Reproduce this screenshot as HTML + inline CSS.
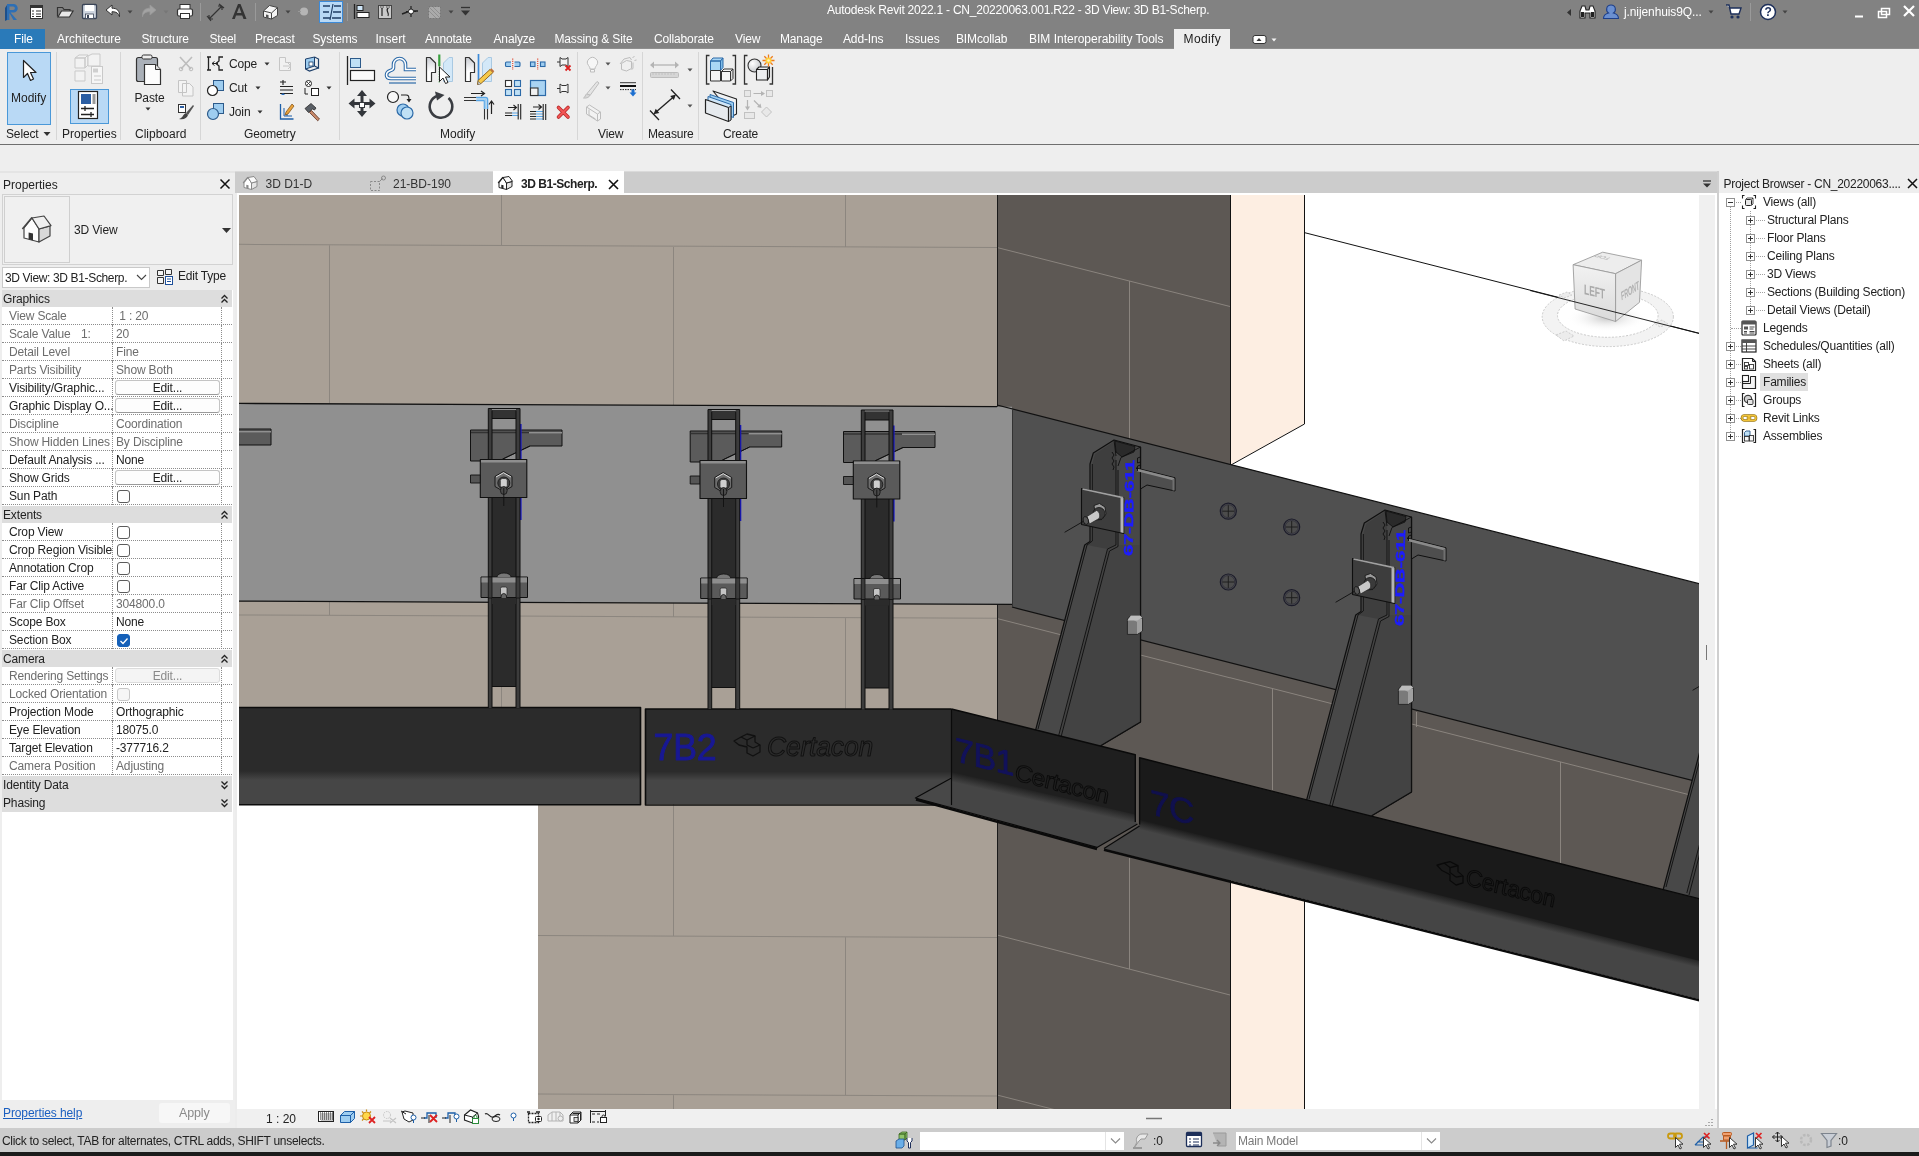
<!DOCTYPE html>
<html lang="en">
<head>
<meta charset="utf-8">
<title>Autodesk Revit 2022.1 - CN_20220063.001.R22 - 3D View: 3D B1-Scherp.</title>
<style>
*{box-sizing:border-box;margin:0;padding:0}
html,body{width:1919px;height:1156px;overflow:hidden;background:#eeeeee}
body{position:relative;will-change:transform;font-family:"Liberation Sans",sans-serif;font-size:12px;color:#222;letter-spacing:-0.15px}
.abs,.abs>*{position:absolute}
.t{position:absolute;white-space:nowrap;line-height:16px;height:16px}
svg{position:absolute;overflow:visible}
/* title + tabs */
#titlebar{left:0;top:0;width:1919px;height:49px;background:transparent;z-index:2}
#titlebg{left:0;top:0;width:1919px;height:48px;background:#828282}
#titlebar .t{color:#fff}
#filetab{left:0;top:29px;width:45px;height:20px;background:#2a7ab9}
#modtab{left:1174px;top:29px;width:56px;height:20px;background:#eeeeee}
/* ribbon */
#ribbon{left:0;top:48px;width:1919px;height:97px;background:#eeeeee;border-bottom:1px solid #6e6e6e}
.sep{position:absolute;top:4px;width:1px;height:88px;background:#d6d6d6}
#optbar{left:0;top:145px;width:1919px;height:26px;background:#eeeeee}
/* view tab strip */
#tabstrip{left:235px;top:171px;width:1482px;height:22px;background:#cccccc}
/* properties */
#props{left:0;top:171px;width:235px;height:957px;background:#eeeeee}
.prow{position:absolute;left:2px;width:230px;height:18px;background:#fff;border-bottom:1px dotted #8c8c8c}
.prow .n{position:absolute;left:7px;top:1px;line-height:17px;white-space:nowrap}
.prow .v{position:absolute;left:114px;top:1px;line-height:17px;white-space:nowrap}
.prow.d .n,.prow.d .v{color:#6d6d6d}
.prow:before{content:"";position:absolute;left:110px;top:0;height:18px;border-left:1px dotted #8c8c8c}
.prow:after{content:"";position:absolute;left:219px;top:0;height:18px;border-left:1px dotted #8c8c8c}
.phead{position:absolute;left:2px;width:230px;height:18px;background:#dddddd}
.phead span{position:absolute;left:1px;top:0;line-height:18px}
.btn{position:absolute;left:113px;top:1px;width:105px;height:15px;border:1px solid #c4c4c4;border-bottom-color:#9a9a9a;border-radius:3px;background:#fdfdfd;text-align:center;line-height:14px}
.cb{position:absolute;left:115px;top:3px;width:13px;height:13px;border:1px solid #5c5c5c;border-radius:3px;background:#fff}
/* project browser */
#pb{left:1719px;top:171px;width:200px;height:957px;background:#fff}
.tr{position:absolute;white-space:nowrap;line-height:18px;height:18px}
.pm{position:absolute;width:9px;height:9px;border:1px solid #919191;background:#fff}
.pm:before{content:"";position:absolute;left:1px;top:3px;width:5px;height:1px;background:#333}
.pm.p:after{content:"";position:absolute;left:3px;top:1px;width:1px;height:5px;background:#333}
/* status */
#status{left:0;top:1128px;width:1919px;height:24px;background:#cccccc}
#blackbar{left:0;top:1152px;width:1919px;height:4px;background:#1b1b1b}
</style>
</head>
<body>
<div id="titlebg" class="abs"></div>
<div id="titlebar" class="abs">
  <div class="t" style="left:827px;top:2px;letter-spacing:-0.23px">Autodesk Revit 2022.1 - CN_20220063.001.R22 - 3D View: 3D B1-Scherp.</div>
  <!-- QAT icons -->
  <svg style="left:0;top:0" width="480" height="26" viewBox="0 0 480 26">
    <!-- R logo -->
    <path d="M7 4h6.5a4 4 0 0 1 0 8.5H10.5L17 20h-3.6l-4-7V20H7z" fill="#2d6fb5"/>
    <path d="M9.5 6.5h3.6a1.8 1.8 0 0 1 0 3.6H9.5z" fill="#828282"/>
    <path d="M5 8l2 -3v15l-2 1z" fill="#1d4f8a"/>
    <!-- list icon -->
    <rect x="30.5" y="5.500" width="12" height="13" fill="#fff" stroke="#333"/><rect x="30" y="5" width="13" height="3" fill="#333"/>
    <path d="M32 11h2M32 14h2M32 16.500h2M36 11h5M36 14h5M36 16.500h5" stroke="#333" stroke-width="1.2"/>
    <!-- open folder -->
    <path d="M57.500 16.500v-9h5l1.500 2h6v2" fill="none" stroke="#333" stroke-width="1.2"/><path d="M58 17l3.500-6h11.500l-3.500 6z" fill="#e8e8e8" stroke="#333" stroke-width="1.2"/>
    <!-- save -->
    <rect x="82.500" y="4.500" width="14" height="14" rx="1" fill="#cfd6e0" stroke="#3a4456" stroke-width="1.3"/><rect x="85" y="5" width="9" height="6" fill="#fff"/><rect x="85.500" y="14" width="8" height="4.500" fill="#fff" stroke="#3a4456" stroke-width=".8"/><rect x="87" y="15" width="2" height="3" fill="#3a4456"/>
    <!-- undo -->
    <path d="M106 10l6-5v3.200c5 0 8 2.500 7.500 8.500c-1-3.500-3-5-7.500-5v3.300z" fill="#fff" stroke="#333" stroke-width="1"/>
    <path d="M127.500 10.500h5l-2.500 3z" fill="#444"/>
    <!-- redo -->
    <path d="M156 10l-6-5v3.200c-5 0-8 2.500-7.500 8.500c1-3.500 3-5 7.500-5v3.300z" fill="#a3a3a3" stroke="#999" stroke-width=".8"/>
    <path d="M163.500 10.500h5l-2.500 3z" fill="#777"/>
    <!-- print -->
    <rect x="180" y="4.500" width="10" height="5" fill="#fff" stroke="#333"/><rect x="177.500" y="9" width="15" height="7" rx="1.500" fill="#fff" stroke="#333" stroke-width="1.2"/><rect x="180.500" y="13.500" width="9" height="5" fill="#fff" stroke="#333"/>
    <path d="M200.500 3v18" stroke="#9a9a9a"/>
    <!-- measure arrows -->
    <path d="M209 19l13-13M209 19v-4M209 19h4M222 6v4M222 6h-4M207 16l4 5M219 4l5 4" stroke="#333" stroke-width="1.2" fill="none"/>
    <!-- A -->
    <path d="M232 19l6-15h2.500l6 15h-3l-1.300-3.500h-6.200L234.800 19zM236.900 13h4.500l-2.200-6z" fill="#333"/>
    <path d="M255.500 3v18" stroke="#9a9a9a"/>
    <!-- house 3d -->
    <path d="M263.500 11l6-5.500 8 2v8l-6 3.500-8-2z" fill="#f4f4f4" stroke="#444" stroke-width="1"/><path d="M263.500 11l8 2 6-5.500M271.500 13v6" stroke="#444" fill="none"/><path d="M266 14.500v3.300l2.500.6v-3.300z" fill="#555"/>
    <path d="M285.500 10.500h5l-2.500 3z" fill="#444"/>
    <circle cx="304" cy="11.500" r="4" fill="#b5b5b5"/><path d="M298 11.500h3" stroke="#999"/>
    <!-- active icon -->
    <rect x="319.500" y="1.500" width="23" height="21" fill="#b9d9f5" stroke="#3c8ad8"/>
    <path d="M323 6h7M323 12h6M323 18h7M334 6h7M333 12h8M332 18h9" stroke="#1f3d63" stroke-width="1.600"/><path d="M333 4l-3 16" stroke="#1f3d63" stroke-width="1.200"/>
    <path d="M347.500 3v18" stroke="#9a9a9a"/>
    <path d="M354.500 4v15" stroke="#222" stroke-width="1.300"/><rect x="357" y="5.500" width="6" height="5" fill="#cfe6f8" stroke="#222"/><rect x="357" y="12.500" width="12" height="5" fill="#fff" stroke="#222"/>
    <rect x="378.500" y="5.500" width="13" height="13" fill="#c9c9c9" stroke="#444"/><path d="M382 8v8M388 8c-3 3 2 5 0 8" stroke="#222" fill="none" stroke-width="1.200"/><circle cx="382" cy="7" r="1.300" fill="#fff" stroke="#222" stroke-width=".7"/><circle cx="388" cy="7" r="1.300" fill="#fff" stroke="#222" stroke-width=".7"/>
    <path d="M402 14l8-3h8" stroke="#222" stroke-width="1.400" fill="none"/><path d="M411 6v11M406 11.500h10" stroke="#222" stroke-width="1.200"/><circle cx="411" cy="11.500" r="2.500" fill="#fff" stroke="#222"/>
    <rect x="428.500" y="6.500" width="12" height="12" fill="#aaa" stroke="#777" stroke-dasharray="2 1"/><path d="M429 7l11 11M433 7l7 7M429 11l7 7" stroke="#888" stroke-width=".8"/>
    <path d="M448.500 10.500h5l-2.500 3z" fill="#444"/>
    <path d="M461 7.500h9" stroke="#333" stroke-width="1.300"/><path d="M461 10.500h9l-4.500 5z" fill="#333"/>
  </svg>
  <!-- right side -->
  <svg style="left:1560px;top:0" width="359" height="26" viewBox="1560 0 359 26">
    <path d="M1571 9v7l-4-3.500z" fill="#333"/>
    <!-- binoculars -->
    <path d="M1580 18v-7l2-5h3l1 4h3l1-4h3l2 5v7h-5v-5h-5v5z" fill="#fff" stroke="#222" stroke-width="1.100"/><rect x="1581" y="12" width="3" height="5" fill="#222"/><rect x="1591" y="12" width="3" height="5" fill="#222"/>
    <!-- user -->
    <path d="M1603.500 18.500c0-4 3-5 5-5.500-3-2-2.500-8 2.500-8s5.500 6 2.500 8c2 .5 5 1.500 5 5.500z" fill="#6a8fd0" stroke="#1d3f8a" stroke-width="1.100"/>
    <path d="M1708.500 10.500h5l-2.500 3z" fill="#444"/>
    <!-- cart -->
    <path d="M1726 5h3l2 9h8l2-6h-11" fill="#fff" stroke="#1d2f5a" stroke-width="1.400"/><circle cx="1732" cy="17" r="1.600" fill="#1d2f5a"/><circle cx="1738" cy="17" r="1.600" fill="#1d2f5a"/>
    <path d="M1750.500 3v18" stroke="#9a9a9a"/>
    <circle cx="1768" cy="12" r="7.500" fill="#fff" stroke="#1d2f5a" stroke-width="1.500"/>
    <path d="M1782.500 10.500h5l-2.500 3z" fill="#444"/>
    <path d="M1855 16.500h8" stroke="#fff" stroke-width="2"/>
    <path d="M1881.500 8.500h8v6h-8zM1878.500 11.500h8v6h-8z" fill="#828282" stroke="#fff" stroke-width="1.500"/>
    <path d="M1904 6l10 10M1914 6l-10 10" stroke="#fff" stroke-width="2.200"/>
  </svg>
  <div class="t" style="left:1764.500px;top:4px;color:#1d2f5a;font-weight:bold;font-size:12px">?</div>
  <div class="t" style="left:1624px;top:4px;letter-spacing:-0.1px">j.nijenhuis9Q...</div>
  <!-- ribbon tabs -->
  <div id="filetab"></div>
  <div id="modtab"></div>
  <div style="left:45px;top:48px;width:1129px;height:1px;background:#8e8e8e"></div><div style="left:1230px;top:48px;width:689px;height:1px;background:#8e8e8e"></div>
  <div class="t" style="left:14px;top:31px">File</div>
  <div class="t" style="left:57px;top:31px;letter-spacing:0">Architecture</div>
  <div class="t" style="left:141.500px;top:31px">Structure</div>
  <div class="t" style="left:209.500px;top:31px">Steel</div>
  <div class="t" style="left:255px;top:31px">Precast</div>
  <div class="t" style="left:312.500px;top:31px">Systems</div>
  <div class="t" style="left:375.500px;top:31px;letter-spacing:0">Insert</div>
  <div class="t" style="left:425px;top:31px">Annotate</div>
  <div class="t" style="left:493.500px;top:31px">Analyze</div>
  <div class="t" style="left:554.500px;top:31px">Massing &amp; Site</div>
  <div class="t" style="left:654px;top:31px">Collaborate</div>
  <div class="t" style="left:735px;top:31px">View</div>
  <div class="t" style="left:780px;top:31px">Manage</div>
  <div class="t" style="left:843px;top:31px">Add-Ins</div>
  <div class="t" style="left:905px;top:31px;letter-spacing:0">Issues</div>
  <div class="t" style="left:956px;top:31px">BIMcollab</div>
  <div class="t" style="left:1029px;top:31px;letter-spacing:0">BIM Interoperability Tools</div>
  <div class="t" style="left:1183.500px;top:31px;color:#1a1a1a;letter-spacing:.4px">Modify</div>
  <svg style="left:1250.500px;top:33px" width="30" height="14" viewBox="0 0 30 14"><rect x="2" y="2.500" width="13" height="8" rx="2" fill="#fff" stroke="#333"/><path d="M5.500 8h5l-2.500-3z" fill="#333"/><path d="M20.500 5.500h5l-2.500 3z" fill="#f4f4f4"/></svg>
</div>
<div id="ribbon" class="abs">
  <div class="sep" style="left:56px"></div><div class="sep" style="left:120px"></div><div class="sep" style="left:200px"></div>
  <div class="sep" style="left:339px"></div><div class="sep" style="left:577px"></div><div class="sep" style="left:642px"></div><div class="sep" style="left:698px"></div>
  <!-- Modify big button -->
  <div style="left:7px;top:4px;width:44px;height:73px;background:#b9d9f5;border:1px solid #4a98d8"></div>
  <div style="left:70px;top:41px;width:39px;height:35px;background:#b9d9f5;border:1px solid #4a98d8"></div>
  <div class="t" style="left:11px;top:42px;letter-spacing:0">Modify</div>
  <div class="t" style="left:6px;top:78px">Select</div>
  <div class="t" style="left:62px;top:78px;letter-spacing:0">Properties</div>
  <div class="t" style="left:134.500px;top:42px">Paste</div>
  <div class="t" style="left:135px;top:78px;letter-spacing:0">Clipboard</div>
  <div class="t" style="left:229px;top:8px">Cope</div>
  <div class="t" style="left:229px;top:32px">Cut</div>
  <div class="t" style="left:229px;top:56px">Join</div>
  <div class="t" style="left:244px;top:78px">Geometry</div>
  <div class="t" style="left:440px;top:78px;letter-spacing:0">Modify</div>
  <div class="t" style="left:598px;top:78px">View</div>
  <div class="t" style="left:648px;top:78px">Measure</div>
  <div class="t" style="left:723px;top:78px">Create</div>
  <svg style="left:0;top:0" width="800" height="96" viewBox="0 48 800 96">
    <!-- cursor arrow -->
    <path d="M23.500 60.500v17l4-4 3 7 3-1.500-3-6.500h5.500z" fill="#fff" stroke="#222" stroke-width="1.200" stroke-linejoin="round"/>
    <path d="M43.500 132h7l-3.500 4z" fill="#333"/>
    <!-- type properties (grey) -->
    <g fill="#f2f2f2" stroke="#c9c9c9"><path d="M75 58l4-3h9l-3 3zM75 58h10v10h-10zM85 58l3-3v10l-3 3z"/><path d="M75 71h10v10h-10zM88 56l4-2h8v12l-12 0z"/><rect x="91.500" y="66.500" width="11" height="17" fill="#f6f6f6"/></g><rect x="93" y="68.500" width="5" height="4" fill="#cfcfcf"/><path d="M94 76h7M94 80h7" stroke="#c9c9c9"/>
    <!-- properties icon -->
    <rect x="78.500" y="91.500" width="19" height="27" fill="#fff" stroke="#222" stroke-width="1.200"/><rect x="81" y="94" width="10" height="10" fill="#2b5ea3"/><rect x="92.500" y="94" width="3" height="10" fill="#9a9a9a"/><path d="M81 108.500h13M81 114.500h13M85 106v5M91 112v5" stroke="#222" stroke-width="1.300"/>
    <!-- paste -->
    <rect x="136.500" y="57.500" width="21" height="24" rx="2" fill="#aab0b8" stroke="#333" stroke-width="1.200"/><rect x="142" y="55" width="10" height="4" rx="1.500" fill="#eee" stroke="#333"/><path d="M144.500 64.500h11l5 5v15h-16z" fill="#fdfdfd" stroke="#333" stroke-width="1.200"/><path d="M155.500 64.500v5h5" fill="#ddd" stroke="#333"/>
    <path d="M145.500 107.500h5l-2.500 3z" fill="#333"/>
    <!-- scissors gray -->
    <path d="M180 57l11 12M192 57l-11 12" stroke="#bdbdbd" stroke-width="1.600"/><circle cx="181" cy="69" r="1.800" fill="none" stroke="#bdbdbd"/><circle cx="191" cy="69" r="1.800" fill="none" stroke="#bdbdbd"/>
    <path d="M178.500 80.500h8v12h-8zM182.500 83.500h7l3.500 3.500v9h-10.500z" fill="#f3f3f3" stroke="#c4c4c4"/>
    <!-- match brush -->
    <rect x="178.500" y="104.500" width="7" height="8" fill="#fff" stroke="#333"/><rect x="180" y="106" width="4" height="2" fill="#2b5ea3"/><path d="M193 105l-7 8 2 2 6-9z" fill="#555"/><path d="M186 113c-3 1-3 5-7 6c5 1 8-1 9-4z" fill="#444"/>
    <!-- cope/cut/join icons -->
    <path d="M208.500 57v13M207 57h4M207 70h4M223 57h-4v4l-3 2.500 3 2.500v4h4" fill="none" stroke="#222" stroke-width="1.300"/><path d="M212 63.500h6M212 63.500l2.500-2M212 63.500l2.500 2" stroke="#222" fill="none"/>
    <rect x="213.500" y="80.500" width="10" height="10" fill="#9ecdf0" stroke="#2c5a8a"/><circle cx="212.500" cy="90.500" r="5" fill="#fff" stroke="#222" stroke-width="1.200"/>
    <rect x="213.500" y="103.500" width="10" height="10" fill="#9ecdf0" stroke="#2c5a8a"/><circle cx="213" cy="114" r="5.500" fill="#9ecdf0" stroke="#2c5a8a" stroke-width="1.200"/>
    <path d="M264.500 62.500h5l-2.500 3zM255.500 86.500h5l-2.500 3zM257.500 110.500h5l-2.500 3zM326.500 86.500h5l-2.500 3z" fill="#333"/>
    <!-- geometry col 2 -->
    <path d="M279.500 57.500h6v5h5v8h-11z" fill="#f1f1f1" stroke="#c6c6c6"/><path d="M283 66h8M288 63l3 3-3 3" stroke="#c6c6c6" fill="none"/>
    <path d="M280 82h6M283 80v5M280 86.500h13M280 90h13M280 93.500h13" stroke="#222" stroke-width="1.100"/><path d="M281 95l2-2 2 2z" fill="#2b6fc0"/>
    <path d="M280.500 104v15h13" fill="none" stroke="#1d5fa8" stroke-width="1.300"/><path d="M284 108v8h8M287 111v5" stroke="#1d5fa8" fill="none"/><path d="M292 104l-6 8-1 3 3-1 6-8z" fill="#e9a23b" stroke="#7a4a10" stroke-width=".7"/>
    <!-- geometry col 3 -->
    <path d="M305.500 59l9-2v9l-9 3z" fill="#9ecdf0" stroke="#1d3f6a"/><path d="M314.500 57l4 2v9l-4 -2M305.500 69l4 2 9-3" fill="none" stroke="#1d3f6a" stroke-width="1.200"/><rect x="309" y="62" width="4" height="4" fill="#fff" stroke="#1d3f6a" stroke-width=".8"/>
    <circle cx="308.500" cy="83.500" r="3" fill="#fff" stroke="#222"/><path d="M306.500 81.500l4 4M310.500 81.500l-4 4" stroke="#222" stroke-width=".8"/><rect x="311.500" y="88.500" width="7" height="7" fill="#fff" stroke="#222"/><path d="M305 88v6h3" stroke="#222" fill="none"/>
    <path d="M305 108.500l6-5 5 4.500-1.500 2-2-1-4 3.500z" fill="#5a5f66" stroke="#2a2a2a" stroke-width=".8"/><path d="M311.500 110.500l8 8.500-1.800 1.800-8.200-8.300z" fill="#c98a6a" stroke="#5a3020" stroke-width=".8"/>
    <!-- Modify panel big icons -->
    <defs><linearGradient id="mg" x1="0" y1="0" x2="0" y2="1"><stop offset="0" stop-color="#c9ccd2"/><stop offset=".6" stop-color="#fff"/></linearGradient></defs>
    <path d="M347.500 56v29" stroke="#222" stroke-width="1.300"/><rect x="350.500" y="58.500" width="10" height="9" fill="#bfe0f5" stroke="#2c5a8a"/><rect x="350.500" y="70.500" width="24" height="10" fill="#fafafa" stroke="#222" stroke-width="1.200"/>
    <path d="M416 69.500h-10.500v-5a6 6 0 0 0-12 0v3c0 2-1 2.500-3 3c-3 1-4 2.500-4 4.500s1.500 3.500 4.500 3.500H416" fill="none" stroke="#2c6aa8" stroke-width="3.600"/><path d="M416 69.500h-10.500v-5a6 6 0 0 0-12 0v3c0 2-1 2.500-3 3c-3 1-4 2.500-4 4.500s1.500 3.500 4.500 3.500H416" fill="none" stroke="#fff" stroke-width="1.500"/><path d="M389 83H416" stroke="#2c6aa8" stroke-width="1.200"/>
    <!-- mirror pick axis -->
    <path d="M426.500 57.500h3.500l5.500 5.500v9.500h-4v9h-5z" fill="url(#mg)" stroke="#333" stroke-width="1.200" stroke-linejoin="round"/>
    <path d="M452.500 57.500h-3.500l-5.500 5.500v18.500h9z" fill="#d3e8f8" stroke="#a9c9e2" stroke-width="1"/>
    <path d="M439.300 54.500v11.500" stroke="#3aa040" stroke-width="2.200"/><path d="M439.300 66v17.500" stroke="#7ab87e" stroke-width="1.400" stroke-dasharray="1.500 1"/>
    <path d="M439.500 67v14.500l3.500-3.500 2.500 5.500 2.500-1-2.500-5.500h4.500z" fill="#fff" stroke="#222" stroke-width="1"/>
    <!-- mirror draw axis -->
    <path d="M465.500 57.500h3.500l5.500 5.500v9.500h-4v9h-5z" fill="url(#mg)" stroke="#333" stroke-width="1.200" stroke-linejoin="round"/>
    <path d="M491.500 57.500h-3.500l-5.500 5.500v18.500h9z" fill="#d3e8f8" stroke="#a9c9e2" stroke-width="1"/>
    <path d="M478.500 54v27.500" stroke="#3c8ad8" stroke-width="1.700"/>
    <path d="M490 69.500l3 3-12 11-3.500 1 .500-4z" fill="#f6c94a" stroke="#8a5a14" stroke-width=".9" stroke-linejoin="round"/><path d="M478 84.500l.300-3 2.500 2.200z" fill="#fff" stroke="#555" stroke-width=".6"/><path d="M490 69.500l3 3 1.300-1.300-3-3z" fill="#c0703a"/>
    <!-- row 2 -->
    <path d="M362 90l5 6h-3.500v6h6v-3.500l6 5-6 5v-3.500h-6v6h3.500l-5 6-5-6h3.500v-6h-6v3.500l-6-5 6-5v3.500h6v-6h-3.500z" fill="#33363b"/><rect x="359.500" y="102.500" width="5" height="5" fill="#fff" stroke="#33363b"/>
    <circle cx="393" cy="97" r="5.500" fill="#f8f8f8" stroke="#222" stroke-width="1.200"/><circle cx="403" cy="110" r="6" fill="#9ecdf0" stroke="#2c6aa8" stroke-width="1.200"/><circle cx="407" cy="113" r="6" fill="#bfe0f5" stroke="#2c6aa8" stroke-width="1.200"/><path d="M401 95h5c2.500 0 3 1 3 5" fill="none" stroke="#222" stroke-width="1.200"/><path d="M406.500 99h5l-2.500 3.500z" fill="#222"/>
    <path d="M448.500 98a11.300 11.300 0 1 1-11-2.300" fill="none" stroke="#3a3d42" stroke-width="2.600"/><path d="M435 91.500l9.500 3.500-7.500 5.500z" fill="#3a3d42"/>
    <path d="M476 97.500h9.500c1 0 2 1 2 2v9.500M476 100.500h7.500c.8 0 1 .5 1 1v7.500" fill="none" stroke="#5aa6e6" stroke-width="1.600"/><path d="M477 99h8.500v10" fill="none" stroke="#9ecdf0" stroke-width="1.500"/>
    <path d="M464 97.500h12M464 100.500h12M484.500 109v10.500M487.500 109v10.500" stroke="#333" stroke-width="1.100"/>
    <path d="M471 93.500h13M481 91l3.500 2.500-3.500 2.500M491.500 114v-12.500M489 104.500l2.500-3.500 2.500 3.500" stroke="#222" fill="none" stroke-width="1.200"/>
    <!-- small icons -->
    <rect x="505.500" y="62" width="14.500" height="4.500" rx="1" fill="#9ecdf0" stroke="#2c6aa8" stroke-width="1.100"/><rect x="511" y="61" width="3.500" height="6.500" fill="#eee"/><path d="M512.700 58.500v11.500" stroke="#e0503a" stroke-width="1.200" stroke-dasharray="1.200 1"/>
    <rect x="530.500" y="62" width="4.500" height="4.500" fill="#9ecdf0" stroke="#2c6aa8" stroke-width="1.100"/><rect x="540.500" y="62" width="4.500" height="4.500" fill="#9ecdf0" stroke="#2c6aa8" stroke-width="1.100"/><path d="M537.700 58.500v11.500" stroke="#e0503a" stroke-width="1.200" stroke-dasharray="1.200 1"/>
    <rect x="505.500" y="80.500" width="6" height="6" fill="#fff" stroke="#333" stroke-width="1.100"/><rect x="514.500" y="80.500" width="6" height="6" fill="#bfe0f5" stroke="#2c6aa8" stroke-width="1.100"/><rect x="505.500" y="89.500" width="6" height="6" fill="#bfe0f5" stroke="#2c6aa8" stroke-width="1.100"/><rect x="514.500" y="89.500" width="6" height="6" fill="#bfe0f5" stroke="#2c6aa8" stroke-width="1.100"/>
    <rect x="530.500" y="80.500" width="15" height="15" fill="#a9d3f2" stroke="#2c6aa8" stroke-width="1.200"/><rect x="530.500" y="88" width="7.500" height="7.500" fill="#f2f2f2" stroke="#333" stroke-width="1.100"/>
    <path d="M508 107.500h8M513.500 105l3 2.500-3 2.500M505 113h7M505 115.500h7" stroke="#222" fill="none" stroke-width="1.100"/><path d="M512 113h6M512 115.500h6" stroke="#5aa6e6" stroke-width="1.200"/><path d="M518.200 104v15.500M520.700 104v15.500" stroke="#222" stroke-width="1.100"/>
    <path d="M533 107h8M538.500 104.500l3 2.500-3 2.500M530 111.500h6M530 114h6M530 116.500h6M530 119h6" stroke="#222" fill="none" stroke-width="1.100"/><path d="M536 111.500h7M536 114h7M536 116.500h7M536 119h7" stroke="#5aa6e6" stroke-width="1.200"/><path d="M543.200 104v16M545.700 104v16" stroke="#222" stroke-width="1.100"/>
    <path d="M557 62h3M560 57.500l2 1.500h4l2-1.500v9l-2-1.500h-4l-2 1.500z" fill="#f4f4f4" stroke="#333" stroke-width="1"/><path d="M565.500 65.500l5 5M570.500 65.500l-5 5" stroke="#d22" stroke-width="1.800"/>
    <path d="M557 88.500h3M560 84l2 1.500h4l2-1.500v9l-2-1.500h-4l-2 1.500z" fill="#f4f4f4" stroke="#333" stroke-width="1"/>
    <path d="M558.500 107.500l9.500 9.500M568 107.500l-9.500 9.500" stroke="#b82a2a" stroke-width="3.600" stroke-linecap="round"/><path d="M558.500 107.500l9.500 9.500M568 107.500l-9.500 9.500" stroke="#f25555" stroke-width="2" stroke-linecap="round"/>
    <!-- View panel (grey) -->
    <g stroke="#bdbdbd" fill="#f6f6f6" stroke-width="1"><path d="M588.500 65.500a5 5 0 1 1 8 0c-1 1.200-1.500 2.300-1.500 3.500h-5c0-1.200-.5-2.300-1.500-3.500z"/><path d="M590.500 69.500h4v2.500h-4z"/>
    <path d="M621.500 63.500l5-3 5 1v7l-5 2.500-5-1.500z" fill="#efefef"/><path d="M620 64l4-5 6-1.500M630 57.500l1.500 2.500M632.500 58l2-2M634.500 60.500l2-.5M633 62.500v6l-1.500 1" fill="none"/>
    <path d="M587 93.500l10-12 2 1.500-9 12.500z" fill="#e4e4e4"/><path d="M586.500 94c-1.500 1-1 3-3 4c3.500.5 6-1 6.500-3z" fill="#d8d8d8"/>
    <path d="M586.500 107l3-2 11 7v7l-3 2-11-7z" fill="#f2f2f2"/><path d="M586.500 107l11 7v7M597.500 114l3-2M589 109.500v5.500l6.500 4" fill="none"/></g>
    <path d="M605.500 62.500h5l-2.500 3zM605.500 86.500h5l-2.500 3z" fill="#555"/>
    <path d="M620 82.700h16" stroke="#222" stroke-width=".9"/><path d="M620 86h16" stroke="#111" stroke-width="2"/><path d="M620 89.600h16" stroke="#222" stroke-width="1" stroke-dasharray="1.500 1"/><path d="M631.500 89.500h3v3h2l-3.500 4-3.500-4h2z" fill="#1d6fd0"/>
    <!-- Measure -->
    <path d="M652 65h25" stroke="#b4b4b4" stroke-width="1.300"/><path d="M650 65l4-3.500v7zM679 65l-4-3.500v7z" fill="#b4b4b4"/><rect x="650.500" y="72.500" width="28" height="5" rx="1" fill="#d6d6d6" stroke="#bcbcbc"/><path d="M653 73v2M656 73v2M659 73v2M662 73v2M665 73v2M668 73v2M671 73v2M674 73v2" stroke="#bcbcbc" stroke-width=".8"/>
    <path d="M687.500 68.500h5l-2.500 3zM687.500 104.500h5l-2.500 3z" fill="#555"/>
    <path d="M655.500 112.500l18.500-16" stroke="#222" stroke-width="1.400"/><path d="M650 110.500l9 9.500M671 89.500l9 9.500" stroke="#222" stroke-width="1.300"/><path d="M653.500 114.300l5.800-1.300-3.600-4.200zM676 94.600l-5.800 1.300 3.600 4.200z" fill="#222"/>
    <!-- Create -->
    <path d="M709.500 55.500h-3v28.500h3M732.500 55.500h3v28.500h-3" fill="none" stroke="#333" stroke-width="1.300"/>
    <path d="M710.500 61l2.500-3h10l-2.500 3zM710.500 61h10v9.500h-10z" fill="#a9d6f5" stroke="#2c6aa8" stroke-width="1"/><path d="M720.500 61l2.500-3v9.500l-2.500 3z" fill="#7fbce8" stroke="#2c6aa8" stroke-width="1"/>
    <path d="M710.500 70.500h10v10.500h-10z" fill="#f4f4f4" stroke="#333" stroke-width="1"/><path d="M721.500 71.500l2.500-2.500h9l-2.500 2.500zM721.500 71.500h9v9.500h-9z" fill="#f4f4f4" stroke="#333" stroke-width="1"/><path d="M730.500 71.500l2.500-2.500v9.500l-2.500 2.500z" fill="#dcdcdc" stroke="#333" stroke-width="1"/>
    <path d="M747.500 55.500h-3v28.500h3M772.500 67v17h-3" fill="none" stroke="#333" stroke-width="1.300"/>
    <defs><radialGradient id="sg" cx=".35" cy=".35" r=".7"><stop offset="0" stop-color="#fff"/><stop offset="1" stop-color="#c4c8cc"/></radialGradient></defs>
    <circle cx="754.500" cy="65.500" r="6.500" fill="url(#sg)" stroke="#333" stroke-width="1.100"/>
    <path d="M756.500 69.500l2.500-2.500h10.500l-2 2.500zM756.500 69.500h11v10.500h-11z" fill="#eceef0" stroke="#222" stroke-width="1.100" stroke-linejoin="round"/><path d="M767.500 69.500l2-2.500v10l-2 3z" fill="#cfd3d6" stroke="#222" stroke-width="1.100" stroke-linejoin="round"/>
    <path d="M768.500 54.500v12M762.500 60.500h12M764.300 56.300l8.400 8.400M772.700 56.300l-8.400 8.400" stroke="#ee7a1a" stroke-width="1.300"/><circle cx="768.500" cy="60.500" r="3" fill="#ffd23a"/><circle cx="768.500" cy="60.500" r="1.300" fill="#fff6c0"/>
    <path d="M713 91l23.500 8v15l-3 1.500z" fill="#f0f2f4" stroke="#222" stroke-width="1.100" stroke-linejoin="round"/>
    <path d="M710 94.500l23.500 8v15l-23.500-8z" fill="#9fd0f3" stroke="#2c6aa8" stroke-width="1"/><path d="M708 96.500l23 8v15l-23-8z" fill="#cfe6f8" stroke="#2c6aa8" stroke-width="1"/>
    <path d="M705.500 99.500l23 8v14l-23-8.500z" fill="#e6eaee" stroke="#222" stroke-width="1.200" stroke-linejoin="round"/><path d="M728.500 107.500l2.500-1.500v14l-2.500 1.500z" fill="#c9ced3" stroke="#222" stroke-width="1"/>
    <g stroke="#c2c2c2" fill="#e8e8e8"><rect x="744.500" y="90.500" width="6" height="6"/><rect x="766.500" y="90.500" width="6" height="6"/><rect x="744.500" y="112.500" width="10" height="6"/><path d="M766.500 107l5 5-5 5-5-5z"/></g>
    <path d="M753.500 93.500h9M747.500 100v8M754 100.500l6 6" stroke="#b4b4b4" stroke-width="1.200" fill="none"/><path d="M765 93.500l-4-2.500v5zM747.500 110.500l-2.500-4h5zM761.500 108l-4.500-1 3.500-3.500z" fill="#b4b4b4"/>
  </svg>
</div>
<div id="optbar" class="abs"></div>
<div id="props" class="abs">
  <div style="left:0;top:0;width:235px;height:2px;background:#e4e4e4"></div>
  <div class="t" style="left:3px;top:6px;letter-spacing:0">Properties</div>
  <svg style="left:219px;top:7px" width="12" height="12" viewBox="0 0 12 12"><path d="M1.500 1.500l9 9M10.500 1.500l-9 9" stroke="#111" stroke-width="1.500"/></svg>
  <!-- type selector -->
  <div style="left:2px;top:23px;width:231px;height:71px;background:#f0f0f0;border:1px solid #d2d2d2"></div>
  <div style="left:4px;top:25px;width:66px;height:67px;background:#f0f0f0;border:1px solid #cfcfcf"></div>
  <svg style="left:20px;top:42px" width="32" height="32" viewBox="0 0 16 16"><path d="M2 7.500L6 2.500L9.500 8V14.500L2 12.500z" fill="#fdfdfd" stroke="#444" stroke-width=".6" stroke-linejoin="round"/><path d="M9.500 8L15 6.500V11.500L9.500 14.500z" fill="#d8d8d8" stroke="#444" stroke-width=".6" stroke-linejoin="round"/><path d="M6 2.500L12 1.500L15.500 6.300L9.500 8z" fill="#efefef" stroke="#444" stroke-width=".6" stroke-linejoin="round"/><path d="M1.200 8L6 2.200" stroke="#444" stroke-width=".8" fill="none"/><path d="M4.300 9.700L6.500 10.300V13.700L4.300 13.100z" fill="#333"/></svg>
  <div class="t" style="left:74px;top:51px">3D View</div>
  <svg style="left:222px;top:57px" width="9" height="5" viewBox="0 0 9 5"><path d="M0 0h9l-4.500 5z" fill="#333"/></svg>
  <div style="left:2px;top:96px;width:148px;height:21px;background:#fff;border:1px solid #c9c9c9"></div>
  <div class="t" style="left:5px;top:99px;letter-spacing:-0.35px">3D View: 3D B1-Scherp.</div>
  <svg style="left:136px;top:103px" width="11" height="7" viewBox="0 0 11 7"><path d="M1 1l4.500 4.500 4.500-4.500" fill="none" stroke="#444" stroke-width="1.100"/></svg>
  <svg style="left:156px;top:97px" width="18" height="18" viewBox="0 0 18 18"><path d="M1.500 2.500h6v5h-6zM9.500 1.500h6v5h-6zM1.500 9.500h6v6h-6z" fill="#f4f4f4" stroke="#333"/><rect x="9.500" y="8.500" width="7" height="8" fill="#fff" stroke="#1d4f9a"/><path d="M11 11h4M11 13.500h4" stroke="#1d4f9a"/></svg>
  <div class="t" style="left:178px;top:97px;letter-spacing:-0.2px">Edit Type</div>
  <div style="left:2px;top:119px;width:231px;height:810px;background:#fff"></div>
<div class="phead" style="top:119px"><span>Graphics</span><svg style="left:218px;top:4px" width="9" height="10" viewBox="0 0 9 10"><path d="M1.500 4.500l3-3 3 3M1.500 8.500l3-3 3 3" fill="none" stroke="#222" stroke-width="1.300"/></svg></div>
  <div class="prow d" style="top:136px"><span class="n">View Scale</span><span class="v">&nbsp;1 : 20</span></div>
  <div class="prow d" style="top:154px"><span class="n">Scale Value</span><span class="n" style="left:79px">1:</span><span class="v">20</span></div>
  <div class="prow d" style="top:172px"><span class="n">Detail Level</span><span class="v">Fine</span></div>
  <div class="prow d" style="top:190px"><span class="n">Parts Visibility</span><span class="v">Show Both</span></div>
  <div class="prow" style="top:208px"><span class="n">Visibility/Graphic...</span><span class="btn">Edit...</span></div>
  <div class="prow" style="top:226px"><span class="n">Graphic Display O...</span><span class="btn">Edit...</span></div>
  <div class="prow d" style="top:244px"><span class="n">Discipline</span><span class="v">Coordination</span></div>
  <div class="prow d" style="top:262px"><span class="n">Show Hidden Lines</span><span class="v">By Discipline</span></div>
  <div class="prow" style="top:280px"><span class="n">Default Analysis ...</span><span class="v">None</span></div>
  <div class="prow" style="top:298px"><span class="n">Show Grids</span><span class="btn">Edit...</span></div>
  <div class="prow" style="top:316px"><span class="n">Sun Path</span><span class="cb"></span></div>
  <div class="phead" style="top:335px"><span>Extents</span><svg style="left:218px;top:4px" width="9" height="10" viewBox="0 0 9 10"><path d="M1.500 4.500l3-3 3 3M1.500 8.500l3-3 3 3" fill="none" stroke="#222" stroke-width="1.300"/></svg></div>
  <div class="prow" style="top:352px"><span class="n">Crop View</span><span class="cb"></span></div>
  <div class="prow" style="top:370px"><span class="n">Crop Region Visible</span><span class="cb"></span></div>
  <div class="prow" style="top:388px"><span class="n">Annotation Crop</span><span class="cb"></span></div>
  <div class="prow" style="top:406px"><span class="n">Far Clip Active</span><span class="cb"></span></div>
  <div class="prow d" style="top:424px"><span class="n">Far Clip Offset</span><span class="v">304800.0</span></div>
  <div class="prow" style="top:442px"><span class="n">Scope Box</span><span class="v">None</span></div>
  <div class="prow" style="top:460px"><span class="n">Section Box</span><span class="cb" style="border-color:#1560b8;background:#1560b8"></span><svg style="left:117px;top:6px" width="10" height="8" viewBox="0 0 10 8"><path d="M1.500 4l2.500 2.500 4.500-5" fill="none" stroke="#fff" stroke-width="1.300"/></svg></div>
  <div class="phead" style="top:479px"><span>Camera</span><svg style="left:218px;top:4px" width="9" height="10" viewBox="0 0 9 10"><path d="M1.500 4.500l3-3 3 3M1.500 8.500l3-3 3 3" fill="none" stroke="#222" stroke-width="1.300"/></svg></div>
  <div class="prow d" style="top:496px"><span class="n">Rendering Settings</span><span class="btn" style="color:#8a8a8a;background:#f4f4f4;border-color:#dcdcdc">Edit...</span></div>
  <div class="prow d" style="top:514px"><span class="n">Locked Orientation</span><span class="cb" style="border-color:#c8c8c8;background:#f6f6f6"></span></div>
  <div class="prow" style="top:532px"><span class="n">Projection Mode</span><span class="v">Orthographic</span></div>
  <div class="prow" style="top:550px"><span class="n">Eye Elevation</span><span class="v">18075.0</span></div>
  <div class="prow" style="top:568px"><span class="n">Target Elevation</span><span class="v">-377716.2</span></div>
  <div class="prow d" style="top:586px"><span class="n">Camera Position</span><span class="v">Adjusting</span></div>
  <div class="phead" style="top:605px"><span>Identity Data</span><svg style="left:218px;top:4px" width="9" height="10" viewBox="0 0 9 10"><path d="M1.500 1.500l3 3 3-3M1.500 5.500l3 3 3-3" fill="none" stroke="#222" stroke-width="1.300"/></svg></div>
  <div class="phead" style="top:623px"><span>Phasing</span><svg style="left:218px;top:4px" width="9" height="10" viewBox="0 0 9 10"><path d="M1.500 1.500l3 3 3-3M1.500 5.500l3 3 3-3" fill="none" stroke="#222" stroke-width="1.300"/></svg></div>
  <div style="left:233px;top:119px;width:2px;height:810px;background:#eee"></div>
  <div class="t" style="left:3px;top:934px;color:#1b5fc0;text-decoration:underline;letter-spacing:-0.1px">Properties help</div>
  <div style="left:159px;top:932px;width:71px;height:20px;background:#f7f7f7;border-radius:3px"></div>
  <div class="t" style="left:179px;top:934px;color:#8a8a8a;font-size:12.500px">Apply</div>
</div>
<div id="tabstrip" class="abs" style="left:235px;width:1482px">
  <div style="left:0;top:0;width:1482px;height:1px;background:#dadada"></div>
  <div style="left:258px;top:0;width:131px;height:24px;background:#fff"></div>
  <svg style="left:7px;top:4px" width="17" height="17" viewBox="0 0 17 17"><path d="M2 7.500L6 2.500L9.500 8V14.500L2 12.500z" fill="#fff" stroke="#8a8a8a" stroke-width="1" stroke-linejoin="round"/><path d="M9.500 8L15 6.500V11.500L9.500 14.500z" fill="#e6e6e6" stroke="#8a8a8a" stroke-width="1" stroke-linejoin="round"/><path d="M6 2.500L12 1.500L15.500 6.300L9.500 8z" fill="#fafafa" stroke="#8a8a8a" stroke-width="1" stroke-linejoin="round"/><path d="M1.200 8L6 2.200" stroke="#8a8a8a" stroke-width="1.300" fill="none"/><path d="M4.300 9.700L6.500 10.300V13.700L4.300 13.100z" fill="#8a8a8a"/></svg>
  <div class="t" style="left:30.500px;top:5px;color:#333;letter-spacing:0">3D D1-D</div>
  <svg style="left:134px;top:4px" width="18" height="18" viewBox="0 0 18 18"><rect x="1.500" y="6.500" width="9" height="9" fill="none" stroke="#8a8a8a" stroke-dasharray="2 1.500"/><path d="M10.500 6.500l3-3" stroke="#8a8a8a"/><circle cx="14.500" cy="3" r="2" fill="none" stroke="#8a8a8a"/></svg>
  <div class="t" style="left:158px;top:5px;color:#333;letter-spacing:0">21-BD-190</div>
  <svg style="left:262px;top:4px" width="17" height="17" viewBox="0 0 17 17"><path d="M2 7.500L6 2.500L9.500 8V14.500L2 12.500z" fill="#fff" stroke="#222" stroke-width="1" stroke-linejoin="round"/><path d="M9.500 8L15 6.500V11.500L9.500 14.500z" fill="#e6e6e6" stroke="#222" stroke-width="1" stroke-linejoin="round"/><path d="M6 2.500L12 1.500L15.500 6.300L9.500 8z" fill="#fafafa" stroke="#222" stroke-width="1" stroke-linejoin="round"/><path d="M1.200 8L6 2.200" stroke="#222" stroke-width="1.300" fill="none"/><path d="M4.300 9.700L6.500 10.300V13.700L4.300 13.100z" fill="#222"/></svg>
  <div class="t" style="left:286px;top:5px;font-weight:bold;letter-spacing:-0.45px">3D B1-Scherp.</div>
  <svg style="left:373px;top:8px" width="11" height="11" viewBox="0 0 11 11"><path d="M1 1l9 9M10 1l-9 9" stroke="#111" stroke-width="1.600"/></svg>
  <svg style="left:1467px;top:9px" width="10" height="8" viewBox="0 0 10 8"><path d="M1 1h8" stroke="#333" stroke-width="1.300"/><path d="M1 3.500h8l-4 4z" fill="#333"/></svg>
</div>
<div class="abs" style="left:235px;top:193px;width:2px;height:935px;background:#ececec"></div>
<div class="abs" style="left:237px;top:193px;width:1480px;height:917px;background:#fff"></div>
<div class="abs" style="left:1699px;top:195px;width:16px;height:915px;background:#f0f0f0"></div>
<div class="abs" style="left:1717px;top:171px;width:2px;height:957px;background:#cfcfcf"></div>
<div class="abs" style="left:1706px;top:645px;width:1px;height:15px;background:#777"></div>
<svg id="scene" style="left:239px;top:195px" width="1460" height="915" viewBox="239 195 1460 915">
<defs><clipPath id="vp"><rect x="239" y="195" width="1460" height="915"/></clipPath></defs>
<g clip-path="url(#vp)" stroke-linejoin="round">
<rect x="239" y="195" width="1460" height="915" fill="#fff"/>
<path d="M239 195H997V1110H538V805H239z" fill="#a9a096"/>
<g transform="matrix(1 .0043 0 1 0 -1.806)"><path d="M239 245.100H997M501.500 190V245M845.500 190V245M329.500 246V404M673.500 246V404M239 615.700H997M329.500 602V616M673.500 602V616M845.500 616V708M501.500 616V708M673.500 800V935M538 935H997M845.500 935V1093.500M538 1093.500H997M673.500 1093.500V1112" stroke="#8c867f" fill="none"/></g>
<rect x="997" y="195" width="233" height="915" fill="#5d5854"/>
<path d="M997 247.500L1230 306.500M1129.500 281V440M997 618.500L1702 798M1272.500 689V790M1560.500 762V864M1416.500 712V726M997 935L1230 995M1129.500 858V969M997 1095L1060 1111" stroke="#8a847e" fill="none"/>
<path d="M997.500 195V1110" stroke="#1a1a1a"/>
<path d="M1230 660L1702 781V901L1230 782z" fill="#5d5854"/>
<path d="M1230 677.700L1702 798M1272.500 689V790M1560.500 762V864M1416.500 712V727" stroke="#8a847e" fill="none"/>
<path d="M1230 195H1304V424L1230 465z" fill="#fdeee2"/>
<path d="M1230 880L1304 900V1110H1230z" fill="#fdeee2"/>
<path d="M1230.500 195V465M1304.500 195V424L1231 465M1304.500 900V1110M1230.500 880V1110" stroke="#111" fill="none"/>
<path d="M1304 232.500L1702 334" stroke="#111" fill="none"/>
<g transform="matrix(1 .0043 0 1 0 -1.806)"><rect x="239" y="404.200" width="773" height="197.700" fill="#909090"/>
<path d="M239 404.200H997M239 601.900H1012" stroke="#111" fill="none" stroke-width="1.300"/></g>
<path d="M1012 408.800L1702 584.5V783L1012 607z" fill="#505050"/>
<path d="M997 405L1702 584.5M1012 607L1702 783" stroke="#111" fill="none" stroke-width="1.200"/>
<path d="M1012.500 409V607" stroke="#333" fill="none"/>
<circle cx="1228.3" cy="511.2" r="8" fill="#4c4c4c" stroke="#1b1b2a" stroke-width="1.200"/><circle cx="1228.3" cy="511.2" r="6.500" fill="none" stroke="#2a2a3a" stroke-width=".7"/><path d="M1222.3 511.2h12M1228.3 505.2v12" stroke="#1b1b1b" stroke-width=".9"/>
<circle cx="1291.7" cy="527" r="8" fill="#4c4c4c" stroke="#1b1b2a" stroke-width="1.200"/><circle cx="1291.7" cy="527" r="6.500" fill="none" stroke="#2a2a3a" stroke-width=".7"/><path d="M1285.7 527h12M1291.7 521v12" stroke="#1b1b1b" stroke-width=".9"/>
<circle cx="1228.3" cy="582" r="8" fill="#4c4c4c" stroke="#1b1b2a" stroke-width="1.200"/><circle cx="1228.3" cy="582" r="6.500" fill="none" stroke="#2a2a3a" stroke-width=".7"/><path d="M1222.3 582h12M1228.3 576v12" stroke="#1b1b1b" stroke-width=".9"/>
<circle cx="1291.7" cy="597.7" r="8" fill="#4c4c4c" stroke="#1b1b2a" stroke-width="1.200"/><circle cx="1291.7" cy="597.7" r="6.500" fill="none" stroke="#2a2a3a" stroke-width=".7"/><path d="M1285.7 597.7h12M1291.7 591.7v12" stroke="#1b1b1b" stroke-width=".9"/>
<!--BRACKETS-->
<g transform="translate(628 158)">
<path d="M1090 464L1093.300 453L1114 440L1140.500 447V722L1100.600 745.800L1050 770L1025 770L1084.700 545L1090 541.500z" fill="#484848" stroke="#0f0f0f" stroke-width="1.200"/>
<path d="M1092.300 464L1095 454L1114 441.500L1116 456V545L1107.500 549L1087 545L1092.300 541z" fill="#3e3e3e"/><path d="M1116 456L1140.500 447V722L1100.600 745.800L1060 772L1050 770L1107.500 549L1116 545z" fill="#434343"/><path d="M1116 456L1140.500 447V545H1116z" fill="#474747"/>
<path d="M1115 441L1135 446.500L1134 452L1122 457L1116 452z" fill="#2a2a2a" stroke="#0f0f0f" stroke-width=".8"/>
<path d="M1114 440L1116 456M1140.500 447L1121 457.500L1118 466M1112 452l2 3-2 3 2 3-2 3 2 3-1 3" fill="none" stroke="#0f0f0f" stroke-width=".9"/>
<path d="M1092.300 464V541L1087 545L1038 729M1116 460V545L1107.500 549L1058.800 735M1118 470V546.500L1109.500 551L1061 737" fill="none" stroke="#0f0f0f" stroke-width=".9"/>
<path d="M1140.500 447V722L1100.600 745.800" fill="none" stroke="#0f0f0f" stroke-width="1.200"/>
<path d="M1136 468L1175 477.800V491L1147 485L1140.500 489V470z" fill="#4e4e4e" stroke="#0f0f0f" stroke-width="1"/>
<path d="M1137.500 470L1174 479.300" stroke="#8a8a8a" stroke-width="2.600"/><path d="M1173.500 479V490.500" stroke="#707070" stroke-width="2"/>
<path d="M1140.500 457l-3 1v5l3-1M1140.500 465l-3 1v5" fill="none" stroke="#0f0f0f" stroke-width=".9"/>
<path d="M1081.500 488.500L1123.700 497.500V533.500L1081.500 524.500z" fill="#3d3d3d" stroke="#0f0f0f" stroke-width="1.100"/>
<path d="M1120.500 497L1123.500 497.600V533L1120.500 532.300z" fill="#b4b4b4"/><path d="M1082.500 489L1123 497.600" stroke="#a0a0a0" stroke-width="1.600"/>
<path d="M1064.600 532.300L1084 521" stroke="#0f0f0f" stroke-width=".9"/>
<path d="M1094 505.500l5.500-2 5.500 3.500 1 7-4 5.500-6 .5z" fill="#9a9a9a" stroke="#1a1a1a" stroke-width=".9"/><circle cx="1099" cy="513.500" r="6" fill="#3a3a3a" stroke="#111" stroke-width=".8"/>
<path d="M1087 516.500l9.500-6c3 1 4 5 2.500 8l-9.500 5.500z" fill="#c8c8c8" stroke="#222" stroke-width=".7"/><ellipse cx="1085.800" cy="520.500" rx="2.600" ry="4" transform="rotate(-15 1085.800 520.500)" fill="#555" stroke="#111" stroke-width=".8"/>
<path d="M1127.400 619l3.500-3.500h9l2.400 2V631l-5 3.400h-9.900z" fill="#7a7a7a" stroke="#1a1a1a" stroke-width=".8"/><path d="M1132 619h10v12l-5 3V622z" fill="#a0a0a0"/><path d="M1130.900 615.500h9l2.400 2-5 3h-9.800z" fill="#bcbcbc"/>
<text transform="translate(1132.500 556) rotate(-89)" font-family="Liberation Sans, sans-serif" font-weight="bold" font-size="12.500" fill="#1c1cff" stroke="#1c1cff" stroke-width=".4" textLength="96" lengthAdjust="spacingAndGlyphs">67-DB-611</text>
</g>
<g transform="translate(271 70)">
<path d="M1090 464L1093.300 453L1114 440L1140.500 447V722L1100.600 745.800L1050 770L1025 770L1084.700 545L1090 541.500z" fill="#484848" stroke="#0f0f0f" stroke-width="1.200"/>
<path d="M1092.300 464L1095 454L1114 441.500L1116 456V545L1107.500 549L1087 545L1092.300 541z" fill="#3e3e3e"/><path d="M1116 456L1140.500 447V722L1100.600 745.800L1060 772L1050 770L1107.500 549L1116 545z" fill="#434343"/><path d="M1116 456L1140.500 447V545H1116z" fill="#474747"/>
<path d="M1115 441L1135 446.500L1134 452L1122 457L1116 452z" fill="#2a2a2a" stroke="#0f0f0f" stroke-width=".8"/>
<path d="M1114 440L1116 456M1140.500 447L1121 457.500L1118 466M1112 452l2 3-2 3 2 3-2 3 2 3-1 3" fill="none" stroke="#0f0f0f" stroke-width=".9"/>
<path d="M1092.300 464V541L1087 545L1038 729M1116 460V545L1107.500 549L1058.800 735M1118 470V546.500L1109.500 551L1061 737" fill="none" stroke="#0f0f0f" stroke-width=".9"/>
<path d="M1140.500 447V722L1100.600 745.800" fill="none" stroke="#0f0f0f" stroke-width="1.200"/>
<path d="M1136 468L1175 477.800V491L1147 485L1140.500 489V470z" fill="#4e4e4e" stroke="#0f0f0f" stroke-width="1"/>
<path d="M1137.500 470L1174 479.300" stroke="#8a8a8a" stroke-width="2.600"/><path d="M1173.500 479V490.500" stroke="#707070" stroke-width="2"/>
<path d="M1140.500 457l-3 1v5l3-1M1140.500 465l-3 1v5" fill="none" stroke="#0f0f0f" stroke-width=".9"/>
<path d="M1081.500 488.500L1123.700 497.500V533.500L1081.500 524.500z" fill="#3d3d3d" stroke="#0f0f0f" stroke-width="1.100"/>
<path d="M1120.500 497L1123.500 497.600V533L1120.500 532.300z" fill="#b4b4b4"/><path d="M1082.500 489L1123 497.600" stroke="#a0a0a0" stroke-width="1.600"/>
<path d="M1064.600 532.300L1084 521" stroke="#0f0f0f" stroke-width=".9"/>
<path d="M1094 505.500l5.500-2 5.500 3.500 1 7-4 5.500-6 .5z" fill="#9a9a9a" stroke="#1a1a1a" stroke-width=".9"/><circle cx="1099" cy="513.500" r="6" fill="#3a3a3a" stroke="#111" stroke-width=".8"/>
<path d="M1087 516.500l9.500-6c3 1 4 5 2.500 8l-9.500 5.500z" fill="#c8c8c8" stroke="#222" stroke-width=".7"/><ellipse cx="1085.800" cy="520.500" rx="2.600" ry="4" transform="rotate(-15 1085.800 520.500)" fill="#555" stroke="#111" stroke-width=".8"/>
<path d="M1127.400 619l3.500-3.500h9l2.400 2V631l-5 3.400h-9.900z" fill="#7a7a7a" stroke="#1a1a1a" stroke-width=".8"/><path d="M1132 619h10v12l-5 3V622z" fill="#a0a0a0"/><path d="M1130.900 615.500h9l2.400 2-5 3h-9.800z" fill="#bcbcbc"/>
<text transform="translate(1132.500 556) rotate(-89)" font-family="Liberation Sans, sans-serif" font-weight="bold" font-size="12.500" fill="#1c1cff" stroke="#1c1cff" stroke-width=".4" textLength="96" lengthAdjust="spacingAndGlyphs">67-DB-611</text>
</g>
<g transform="translate(0 0)">
<path d="M1090 464L1093.300 453L1114 440L1140.500 447V722L1100.600 745.800L1050 770L1025 770L1084.700 545L1090 541.500z" fill="#484848" stroke="#0f0f0f" stroke-width="1.200"/>
<path d="M1092.300 464L1095 454L1114 441.500L1116 456V545L1107.500 549L1087 545L1092.300 541z" fill="#3e3e3e"/><path d="M1116 456L1140.500 447V722L1100.600 745.800L1060 772L1050 770L1107.500 549L1116 545z" fill="#434343"/><path d="M1116 456L1140.500 447V545H1116z" fill="#474747"/>
<path d="M1115 441L1135 446.500L1134 452L1122 457L1116 452z" fill="#2a2a2a" stroke="#0f0f0f" stroke-width=".8"/>
<path d="M1114 440L1116 456M1140.500 447L1121 457.500L1118 466M1112 452l2 3-2 3 2 3-2 3 2 3-1 3" fill="none" stroke="#0f0f0f" stroke-width=".9"/>
<path d="M1092.300 464V541L1087 545L1038 729M1116 460V545L1107.500 549L1058.800 735M1118 470V546.500L1109.500 551L1061 737" fill="none" stroke="#0f0f0f" stroke-width=".9"/>
<path d="M1140.500 447V722L1100.600 745.800" fill="none" stroke="#0f0f0f" stroke-width="1.200"/>
<path d="M1136 468L1175 477.800V491L1147 485L1140.500 489V470z" fill="#4e4e4e" stroke="#0f0f0f" stroke-width="1"/>
<path d="M1137.500 470L1174 479.300" stroke="#8a8a8a" stroke-width="2.600"/><path d="M1173.500 479V490.500" stroke="#707070" stroke-width="2"/>
<path d="M1140.500 457l-3 1v5l3-1M1140.500 465l-3 1v5" fill="none" stroke="#0f0f0f" stroke-width=".9"/>
<path d="M1081.500 488.500L1123.700 497.500V533.500L1081.500 524.500z" fill="#3d3d3d" stroke="#0f0f0f" stroke-width="1.100"/>
<path d="M1120.500 497L1123.500 497.600V533L1120.500 532.300z" fill="#b4b4b4"/><path d="M1082.500 489L1123 497.600" stroke="#a0a0a0" stroke-width="1.600"/>
<path d="M1064.600 532.300L1084 521" stroke="#0f0f0f" stroke-width=".9"/>
<path d="M1094 505.500l5.500-2 5.500 3.500 1 7-4 5.500-6 .5z" fill="#9a9a9a" stroke="#1a1a1a" stroke-width=".9"/><circle cx="1099" cy="513.500" r="6" fill="#3a3a3a" stroke="#111" stroke-width=".8"/>
<path d="M1087 516.500l9.500-6c3 1 4 5 2.500 8l-9.500 5.500z" fill="#c8c8c8" stroke="#222" stroke-width=".7"/><ellipse cx="1085.800" cy="520.500" rx="2.600" ry="4" transform="rotate(-15 1085.800 520.500)" fill="#555" stroke="#111" stroke-width=".8"/>
<path d="M1127.400 619l3.500-3.500h9l2.400 2V631l-5 3.400h-9.900z" fill="#7a7a7a" stroke="#1a1a1a" stroke-width=".8"/><path d="M1132 619h10v12l-5 3V622z" fill="#a0a0a0"/><path d="M1130.900 615.500h9l2.400 2-5 3h-9.800z" fill="#bcbcbc"/>
<text transform="translate(1132.500 556) rotate(-89)" font-family="Liberation Sans, sans-serif" font-weight="bold" font-size="12.500" fill="#1c1cff" stroke="#1c1cff" stroke-width=".4" textLength="96" lengthAdjust="spacingAndGlyphs">67-DB-611</text>
</g>
<!--/BRACKETS-->
<!--PROFILES-->
<defs><linearGradient id="ff" x1="0" y1="0" x2="0" y2="1"><stop offset="0" stop-color="#2b2b2b"/><stop offset="1" stop-color="#464646"/></linearGradient></defs>
<rect x="239" y="708" width="401" height="68" fill="#2b2b2b"/><rect x="239" y="776" width="401" height="28.500" fill="#464646"/>
<rect x="239" y="771" width="401" height="9" fill="url(#ff)"/><path d="M239 707.500H640.500V804.800H239" fill="none" stroke="#0c0c0c" stroke-width="1.600"/>
<rect x="645.500" y="709" width="306" height="67.500" fill="#2b2b2b"/><rect x="645.500" y="776.500" width="306" height="27.500" fill="#464646"/>
<rect x="645.500" y="771.500" width="306" height="9" fill="url(#ff)"/>
<path d="M951.500 709H645.500V805H938" fill="none" stroke="#0c0c0c" stroke-width="1.600"/>
<path d="M951.500 709L1135.300 754.700V819.400L951.500 776.800z" fill="#1f1f1f"/>
<path d="M951.500 776.800L1135.300 819.400L1137 824.500L1097 847.400L915.400 798z" fill="#454545"/>
<path d="M951.500 777v28h-14l-22-7z" fill="#484848"/>
<defs><linearGradient id="g7c" gradientUnits="userSpaceOnUse" x1="1140.800" y1="819.650" x2="1138.400" y2="829.350"><stop offset="0" stop-color="#1a1a1a"/><stop offset="1" stop-color="#454545"/></linearGradient><linearGradient id="g7b" gradientUnits="userSpaceOnUse" x1="952.600" y1="771.900" x2="950.400" y2="781.700"><stop offset="0" stop-color="#1f1f1f"/><stop offset="1" stop-color="#454545"/></linearGradient></defs>
<path d="M951.500 771.800L1135.300 814.400V824.400L951.500 781.800z" fill="url(#g7b)"/>
<path d="M951.500 709L1135.300 754.700V822" fill="none" stroke="#0a0a0a" stroke-width="1.400"/>
<path d="M951.500 709V805M951.500 778L915.400 798L1097 847.400L1137.500 824" fill="none" stroke="#0a0a0a" stroke-width="1.200"/>
<path d="M916 799.500L1097 849" fill="none" stroke="#0a0a0a" stroke-width="2.400"/>
<path d="M1139.600 757.800L1702 899.4V966.5L1139.600 824.500z" fill="#1a1a1a"/>
<path d="M1139.600 824.500L1702 966.5V1000L1104 848.500z" fill="#454545"/>
<path d="M1139.600 819.500L1702 961.5V971.5L1139.600 829.500z" fill="url(#g7c)"/>
<path d="M1139.600 824.500V757.800L1702 899.4" fill="none" stroke="#0a0a0a" stroke-width="1.400"/>
<path d="M1139.600 826L1104 848.500" fill="none" stroke="#0a0a0a" stroke-width="1.100"/>
<path d="M1104 849.700L1702 1001" fill="none" stroke="#0a0a0a" stroke-width="2.600"/>
<text x="653.500" y="760" font-family="Liberation Sans, sans-serif" font-size="36" fill="#181894" stroke="#181894" stroke-width=".9" textLength="63" lengthAdjust="spacingAndGlyphs">7B2</text>
<g transform="translate(733,733)" stroke="#111" fill="none" stroke-width="1.300"><path d="M8 4l6-3 8 2v6l5 3v7l-7 4-6-3v-6l-8-2-5-4z"/><path d="M8 4l6 3v5l6 3M14 7l8-4M20 15l7-3"/></g>
<text x="767" y="755.500" font-family="Liberation Sans, sans-serif" font-style="italic" font-size="27" fill="none" stroke="#111" stroke-width="1" textLength="106" lengthAdjust="spacingAndGlyphs">Certacon</text>
<text transform="matrix(1 .255 0 1 955 761)" font-family="Liberation Sans, sans-serif" font-size="34" fill="#12125a" stroke="#12125a" stroke-width=".8" letter-spacing="-0.500">7B1</text>
<text transform="matrix(1 .255 0 1 1015 780)" font-family="Liberation Sans, sans-serif" font-style="italic" font-size="24" fill="none" stroke="#0c0c0c" stroke-width="1" letter-spacing="-0.500">Certacon</text>
<text transform="matrix(1 .255 0 1 1150 814)" font-family="Liberation Sans, sans-serif" font-size="35" fill="#10104e" stroke="#10104e" stroke-width=".7" letter-spacing="-0.500">7C</text>
<g transform="matrix(1 .255 0 1 1436 857)" stroke="#0a0a0a" fill="none" stroke-width="1.300"><path d="M8 4l6-3 8 2v6l5 3v7l-7 4-6-3v-6l-8-2-5-4z"/><path d="M8 4l6 3v5l6 3M14 7l8-4M20 15l7-3"/></g>
<text transform="matrix(1 .255 0 1 1466 885)" font-family="Liberation Sans, sans-serif" font-style="italic" font-size="24" fill="none" stroke="#0a0a0a" stroke-width="1" textLength="89" lengthAdjust="spacingAndGlyphs">Certacon</text>
<!--/PROFILES-->
<!--HANGERS-->
<g transform="translate(-291 -1)">
<path d="M470.500 430H562V446H530L502.700 459V461H470.500z" fill="#5b5b5b" stroke="#111" stroke-width="1"/>
<path d="M471 432.500H562" stroke="#333" stroke-width="1.400"/><path d="M530 446L502 459.500" stroke="#111" stroke-width=".9"/><path d="M529 432h33v1.500h-33z" fill="#909090"/>
<rect x="470.500" y="475" width="10" height="8" fill="#555" stroke="#111" stroke-width=".9"/>
<path d="M520.700 424V520" stroke="#1a1acc" stroke-width="1.800"/>
<rect x="488.300" y="408.500" width="31.700" height="300" fill="none"/>
<rect x="491.800" y="410" width="24.200" height="8.500" fill="#333"/>
<rect x="491.800" y="497" width="24.200" height="189.500" fill="#2b2b2b"/>

<rect x="488.300" y="408.500" width="3.700" height="299.500" fill="#3c3c3c"/><rect x="516" y="408.500" width="4" height="299.500" fill="#3c3c3c"/>
<path d="M488.300 708V408.500H520V708M492 410.500V708M516 410.500V708M492 418.500H516M492 686.500H516" fill="none" stroke="#0f0f0f" stroke-width="1"/>
<rect x="480.300" y="459.500" width="46.500" height="38" fill="#5a5a5a" stroke="#111" stroke-width="1.100"/><rect x="481" y="460" width="45" height="2.500" fill="#8e8e8e"/>
<path d="M495 476.500l8.500-5 8.500 5v10l-8.500 5-8.500-5z" fill="#6e6e6e" stroke="#111" stroke-width=".9"/><path d="M496 477l7.500-4.300 7.500 4.300" fill="none" stroke="#ddd" stroke-width="1"/>
<circle cx="503.800" cy="483" r="6" fill="#444" stroke="#111" stroke-width=".8"/><rect x="500.300" y="478.500" width="7" height="9" rx="2" fill="#cfcfcf" stroke="#222" stroke-width=".7"/><ellipse cx="503.800" cy="490.500" rx="3.400" ry="4" fill="#4a4a4a" stroke="#111" stroke-width=".8"/>
<path d="M503.800 488V506" stroke="#111" stroke-width=".9"/>
<rect x="481" y="577" width="46.500" height="20.500" fill="#5a5a5a" stroke="#111" stroke-width="1"/><rect x="481.500" y="577.500" width="45.500" height="5" fill="#8e8e8e"/>
<rect x="488.300" y="577" width="3.700" height="21" fill="#3c3c3c" stroke="#0f0f0f" stroke-width=".8"/><rect x="516" y="577" width="4" height="21" fill="#3c3c3c" stroke="#0f0f0f" stroke-width=".8"/>
<path d="M497 577a7 4 0 0 1 14 0" fill="#777" stroke="#111" stroke-width=".8"/>
<rect x="500.500" y="587" width="6.500" height="9" rx="1.500" fill="#c4c4c4" stroke="#222" stroke-width=".7"/><ellipse cx="503.800" cy="597" rx="2.800" ry="3.500" fill="#666" stroke="#111" stroke-width=".8"/>
<rect x="492" y="598" width="24" height="6" fill="#2b2b2b"/>
</g>
<g transform="translate(0 0)">
<path d="M470.500 430H562V446H530L502.700 459V461H470.500z" fill="#5b5b5b" stroke="#111" stroke-width="1"/>
<path d="M471 432.500H562" stroke="#333" stroke-width="1.400"/><path d="M530 446L502 459.500" stroke="#111" stroke-width=".9"/><path d="M529 432h33v1.500h-33z" fill="#909090"/>
<rect x="470.500" y="475" width="10" height="8" fill="#555" stroke="#111" stroke-width=".9"/>
<path d="M520.700 424V520" stroke="#1a1acc" stroke-width="1.800"/>
<rect x="488.300" y="408.500" width="31.700" height="300" fill="none"/>
<rect x="491.800" y="410" width="24.200" height="8.500" fill="#333"/>
<rect x="491.800" y="497" width="24.200" height="189.500" fill="#2b2b2b"/>

<rect x="488.300" y="408.500" width="3.700" height="299.500" fill="#3c3c3c"/><rect x="516" y="408.500" width="4" height="299.500" fill="#3c3c3c"/>
<path d="M488.300 708V408.500H520V708M492 410.500V708M516 410.500V708M492 418.500H516M492 686.500H516" fill="none" stroke="#0f0f0f" stroke-width="1"/>
<rect x="480.300" y="459.500" width="46.500" height="38" fill="#5a5a5a" stroke="#111" stroke-width="1.100"/><rect x="481" y="460" width="45" height="2.500" fill="#8e8e8e"/>
<path d="M495 476.500l8.500-5 8.500 5v10l-8.500 5-8.500-5z" fill="#6e6e6e" stroke="#111" stroke-width=".9"/><path d="M496 477l7.500-4.300 7.500 4.300" fill="none" stroke="#ddd" stroke-width="1"/>
<circle cx="503.800" cy="483" r="6" fill="#444" stroke="#111" stroke-width=".8"/><rect x="500.300" y="478.500" width="7" height="9" rx="2" fill="#cfcfcf" stroke="#222" stroke-width=".7"/><ellipse cx="503.800" cy="490.500" rx="3.400" ry="4" fill="#4a4a4a" stroke="#111" stroke-width=".8"/>
<path d="M503.800 488V506" stroke="#111" stroke-width=".9"/>
<rect x="481" y="577" width="46.500" height="20.500" fill="#5a5a5a" stroke="#111" stroke-width="1"/><rect x="481.500" y="577.500" width="45.500" height="5" fill="#8e8e8e"/>
<rect x="488.300" y="577" width="3.700" height="21" fill="#3c3c3c" stroke="#0f0f0f" stroke-width=".8"/><rect x="516" y="577" width="4" height="21" fill="#3c3c3c" stroke="#0f0f0f" stroke-width=".8"/>
<path d="M497 577a7 4 0 0 1 14 0" fill="#777" stroke="#111" stroke-width=".8"/>
<rect x="500.500" y="587" width="6.500" height="9" rx="1.500" fill="#c4c4c4" stroke="#222" stroke-width=".7"/><ellipse cx="503.800" cy="597" rx="2.800" ry="3.500" fill="#666" stroke="#111" stroke-width=".8"/>
<rect x="492" y="598" width="24" height="6" fill="#2b2b2b"/>
</g>
<g transform="translate(219.7 1)">
<path d="M470.500 430H562V446H530L502.700 459V461H470.500z" fill="#5b5b5b" stroke="#111" stroke-width="1"/>
<path d="M471 432.500H562" stroke="#333" stroke-width="1.400"/><path d="M530 446L502 459.500" stroke="#111" stroke-width=".9"/><path d="M529 432h33v1.500h-33z" fill="#909090"/>
<rect x="470.500" y="475" width="10" height="8" fill="#555" stroke="#111" stroke-width=".9"/>
<path d="M520.700 424V520" stroke="#1a1acc" stroke-width="1.800"/>
<rect x="488.300" y="408.500" width="31.700" height="300" fill="none"/>
<rect x="491.800" y="410" width="24.200" height="8.500" fill="#333"/>
<rect x="491.800" y="497" width="24.200" height="189.500" fill="#2b2b2b"/>

<rect x="488.300" y="408.500" width="3.700" height="299.500" fill="#3c3c3c"/><rect x="516" y="408.500" width="4" height="299.500" fill="#3c3c3c"/>
<path d="M488.300 708V408.500H520V708M492 410.500V708M516 410.500V708M492 418.500H516M492 686.500H516" fill="none" stroke="#0f0f0f" stroke-width="1"/>
<rect x="480.300" y="459.500" width="46.500" height="38" fill="#5a5a5a" stroke="#111" stroke-width="1.100"/><rect x="481" y="460" width="45" height="2.500" fill="#8e8e8e"/>
<path d="M495 476.500l8.500-5 8.500 5v10l-8.500 5-8.500-5z" fill="#6e6e6e" stroke="#111" stroke-width=".9"/><path d="M496 477l7.500-4.300 7.500 4.300" fill="none" stroke="#ddd" stroke-width="1"/>
<circle cx="503.800" cy="483" r="6" fill="#444" stroke="#111" stroke-width=".8"/><rect x="500.300" y="478.500" width="7" height="9" rx="2" fill="#cfcfcf" stroke="#222" stroke-width=".7"/><ellipse cx="503.800" cy="490.500" rx="3.400" ry="4" fill="#4a4a4a" stroke="#111" stroke-width=".8"/>
<path d="M503.800 488V506" stroke="#111" stroke-width=".9"/>
<rect x="481" y="577" width="46.500" height="20.500" fill="#5a5a5a" stroke="#111" stroke-width="1"/><rect x="481.500" y="577.500" width="45.500" height="5" fill="#8e8e8e"/>
<rect x="488.300" y="577" width="3.700" height="21" fill="#3c3c3c" stroke="#0f0f0f" stroke-width=".8"/><rect x="516" y="577" width="4" height="21" fill="#3c3c3c" stroke="#0f0f0f" stroke-width=".8"/>
<path d="M497 577a7 4 0 0 1 14 0" fill="#777" stroke="#111" stroke-width=".8"/>
<rect x="500.500" y="587" width="6.500" height="9" rx="1.500" fill="#c4c4c4" stroke="#222" stroke-width=".7"/><ellipse cx="503.800" cy="597" rx="2.800" ry="3.500" fill="#666" stroke="#111" stroke-width=".8"/>
<rect x="492" y="598" width="24" height="6" fill="#2b2b2b"/>
</g>
<g transform="translate(373 1.5)">
<path d="M470.500 430H562V446H530L502.700 459V461H470.500z" fill="#5b5b5b" stroke="#111" stroke-width="1"/>
<path d="M471 432.500H562" stroke="#333" stroke-width="1.400"/><path d="M530 446L502 459.500" stroke="#111" stroke-width=".9"/><path d="M529 432h33v1.500h-33z" fill="#909090"/>
<rect x="470.500" y="475" width="10" height="8" fill="#555" stroke="#111" stroke-width=".9"/>
<path d="M520.700 424V520" stroke="#1a1acc" stroke-width="1.800"/>
<rect x="488.300" y="408.500" width="31.700" height="300" fill="none"/>
<rect x="491.800" y="410" width="24.200" height="8.500" fill="#333"/>
<rect x="491.800" y="497" width="24.200" height="189.500" fill="#2b2b2b"/>

<rect x="488.300" y="408.500" width="3.700" height="299.500" fill="#3c3c3c"/><rect x="516" y="408.500" width="4" height="299.500" fill="#3c3c3c"/>
<path d="M488.300 708V408.500H520V708M492 410.500V708M516 410.500V708M492 418.500H516M492 686.500H516" fill="none" stroke="#0f0f0f" stroke-width="1"/>
<rect x="480.300" y="459.500" width="46.500" height="38" fill="#5a5a5a" stroke="#111" stroke-width="1.100"/><rect x="481" y="460" width="45" height="2.500" fill="#8e8e8e"/>
<path d="M495 476.500l8.500-5 8.500 5v10l-8.500 5-8.500-5z" fill="#6e6e6e" stroke="#111" stroke-width=".9"/><path d="M496 477l7.500-4.300 7.500 4.300" fill="none" stroke="#ddd" stroke-width="1"/>
<circle cx="503.800" cy="483" r="6" fill="#444" stroke="#111" stroke-width=".8"/><rect x="500.300" y="478.500" width="7" height="9" rx="2" fill="#cfcfcf" stroke="#222" stroke-width=".7"/><ellipse cx="503.800" cy="490.500" rx="3.400" ry="4" fill="#4a4a4a" stroke="#111" stroke-width=".8"/>
<path d="M503.800 488V506" stroke="#111" stroke-width=".9"/>
<rect x="481" y="577" width="46.500" height="20.500" fill="#5a5a5a" stroke="#111" stroke-width="1"/><rect x="481.500" y="577.500" width="45.500" height="5" fill="#8e8e8e"/>
<rect x="488.300" y="577" width="3.700" height="21" fill="#3c3c3c" stroke="#0f0f0f" stroke-width=".8"/><rect x="516" y="577" width="4" height="21" fill="#3c3c3c" stroke="#0f0f0f" stroke-width=".8"/>
<path d="M497 577a7 4 0 0 1 14 0" fill="#777" stroke="#111" stroke-width=".8"/>
<rect x="500.500" y="587" width="6.500" height="9" rx="1.500" fill="#c4c4c4" stroke="#222" stroke-width=".7"/><ellipse cx="503.800" cy="597" rx="2.800" ry="3.500" fill="#666" stroke="#111" stroke-width=".8"/>
<rect x="492" y="598" width="24" height="6" fill="#2b2b2b"/>
</g>
<!--/HANGERS-->
<!--CUBE-->
<defs><radialGradient id="shd" cx=".5" cy=".5" r=".5"><stop offset="0" stop-color="#9a9a9a" stop-opacity=".55"/><stop offset="1" stop-color="#fff" stop-opacity="0"/></radialGradient><linearGradient id="cl" x1="0" y1="0" x2="0" y2="1"><stop offset="0" stop-color="#f2f2f2"/><stop offset="1" stop-color="#dadada"/></linearGradient></defs>
<ellipse cx="1607.800" cy="316.800" rx="65.600" ry="29.800" fill="#f3f3f3" stroke="#c4c4c4" stroke-dasharray="2 1.500" stroke-width=".9"/>
<ellipse cx="1607.800" cy="315.500" rx="50.300" ry="21.800" fill="#fff" stroke="#c4c4c4" stroke-dasharray="2 1.500" stroke-width=".9"/>
<ellipse cx="1607" cy="318" rx="40" ry="14" fill="url(#shd)"/>
<path d="M1573.100 264.700L1602.700 252.200L1641.600 260.200L1615.600 273.700z" fill="#ededed" stroke="#9c9c9c" stroke-width=".9"/>
<path d="M1573.100 264.700L1615.600 273.700V321.500L1575.100 309z" fill="url(#cl)" stroke="#9c9c9c" stroke-width=".9"/>
<path d="M1615.600 273.700L1641.600 260.200L1639.500 302.300L1615.600 321.500z" fill="#e4e4e4" stroke="#9c9c9c" stroke-width=".9"/>
<text transform="matrix(1 .24 0 1 1584 294)" font-family="Liberation Sans, sans-serif" font-weight="bold" font-size="14" fill="#a9a9a9" textLength="21" lengthAdjust="spacingAndGlyphs">LEFT</text>
<text transform="matrix(.82 -.52 .1 1 1621.500 300.500)" font-family="Liberation Sans, sans-serif" font-weight="bold" font-size="12" fill="#b0b0b0" textLength="22" lengthAdjust="spacingAndGlyphs">FRONT</text>
<text transform="matrix(-.9 -.2 .8 -.35 1612 258)" font-family="Liberation Sans, sans-serif" font-weight="bold" font-size="8" fill="#bdbdbd">TOP</text>
<path d="M1556 335l10-4 8 5-10 5zM1654 323l8-3 6 4-8 3zM1559 295l8-3 5 3-8 3z" fill="#ececec" stroke="#c4c4c4" stroke-dasharray="2 1.500" stroke-width=".8"/>
<path d="M1530 290.500L1702 334.2" stroke="#111" stroke-width=".9"/>
<!--/CUBE-->
</g></svg>
<div id="pb" class="abs">
<div style="left:0;top:0;width:200px;height:22px;background:#eeeeee"></div>

<div class="t" style="left:4.500px;top:5px;letter-spacing:-0.27px">Project Browser - CN_20220063....</div>
<svg style="left:188px;top:7px" width="11" height="11" viewBox="0 0 11 11"><path d="M1 1l9 9M10 1l-9 9" stroke="#111" stroke-width="1.500"/></svg>
<div style="left:11px;top:36px;width:0;height:229px;border-left:1px dotted #a0a0a0"></div>
<div style="left:31px;top:40px;width:0;height:99px;border-left:1px dotted #a0a0a0"></div>
<div style="left:12px;top:31px;width:10px;height:0;border-top:1px dotted #a0a0a0"></div>
<div class="pm " style="left:7px;top:27px"></div>
<svg style="left:22px;top:23px" width="16" height="16" viewBox="0 0 16 16"><path d="M3.500 1.500h-2v3M12.500 1.500h2v3M3.500 14.500h-2v-3M12.500 14.500h2v-3" fill="none" stroke="#222" stroke-width="1.100"/><rect x="4.500" y="5.500" width="6" height="6" rx="1" fill="#e8e8e8" stroke="#222"/><path d="M4.500 5.500l1.500-1.500h6l-1.500 1.500M12 4v6l-1.500 1.500" fill="none" stroke="#222" stroke-width=".8"/></svg>
<div class="tr" style="left:44px;top:22px;letter-spacing:-0.2px">Views (all)</div>
<div style="left:32px;top:49px;width:14px;height:0;border-top:1px dotted #a0a0a0"></div>
<div class="pm p" style="left:27px;top:45px"></div>
<div class="tr" style="left:48px;top:40px;letter-spacing:-0.2px">Structural Plans</div>
<div style="left:32px;top:67px;width:14px;height:0;border-top:1px dotted #a0a0a0"></div>
<div class="pm p" style="left:27px;top:63px"></div>
<div class="tr" style="left:48px;top:58px;letter-spacing:-0.2px">Floor Plans</div>
<div style="left:32px;top:85px;width:14px;height:0;border-top:1px dotted #a0a0a0"></div>
<div class="pm p" style="left:27px;top:81px"></div>
<div class="tr" style="left:48px;top:76px;letter-spacing:-0.2px">Ceiling Plans</div>
<div style="left:32px;top:103px;width:14px;height:0;border-top:1px dotted #a0a0a0"></div>
<div class="pm p" style="left:27px;top:99px"></div>
<div class="tr" style="left:48px;top:94px;letter-spacing:-0.2px">3D Views</div>
<div style="left:32px;top:121px;width:14px;height:0;border-top:1px dotted #a0a0a0"></div>
<div class="pm p" style="left:27px;top:117px"></div>
<div class="tr" style="left:48px;top:112px;letter-spacing:-0.2px">Sections (Building Section)</div>
<div style="left:32px;top:139px;width:14px;height:0;border-top:1px dotted #a0a0a0"></div>
<div class="pm p" style="left:27px;top:135px"></div>
<div class="tr" style="left:48px;top:130px;letter-spacing:-0.2px">Detail Views (Detail)</div>
<div style="left:12px;top:157px;width:10px;height:0;border-top:1px dotted #a0a0a0"></div>
<svg style="left:22px;top:149px" width="16" height="16" viewBox="0 0 16 16"><rect x="1" y="1" width="14" height="14" rx="1" fill="#fff" stroke="#222" stroke-width="1.200"/><rect x="1" y="1" width="14" height="3.500" fill="#555"/><rect x="3" y="6.500" width="4" height="3" fill="#555"/><path d="M8.500 7h5M8.500 9h4M3 11.500h3M3 13h3M8.500 11.500h5M8.500 13h5" stroke="#333" stroke-width=".9"/></svg>
<div class="tr" style="left:44px;top:148px;letter-spacing:-0.2px">Legends</div>
<div style="left:12px;top:175px;width:10px;height:0;border-top:1px dotted #a0a0a0"></div>
<div class="pm p" style="left:7px;top:171px"></div>
<svg style="left:22px;top:167px" width="16" height="16" viewBox="0 0 16 16"><rect x="1" y="2" width="14" height="12" fill="#fff" stroke="#222" stroke-width="1.200"/><rect x="1" y="2" width="14" height="3" fill="#555"/><path d="M1 8h14M1 11h14M5.500 5v9" stroke="#333" stroke-width=".9"/></svg>
<div class="tr" style="left:44px;top:166px;letter-spacing:-0.2px">Schedules/Quantities (all)</div>
<div style="left:12px;top:193px;width:10px;height:0;border-top:1px dotted #a0a0a0"></div>
<div class="pm p" style="left:7px;top:189px"></div>
<svg style="left:22px;top:185px" width="16" height="16" viewBox="0 0 16 16"><path d="M1.500 2.500h10l3 3v9h-13z" fill="#fff" stroke="#222" stroke-width="1.200"/><path d="M11.500 2.500v3h3" fill="none" stroke="#222"/><rect x="3.500" y="6.500" width="4" height="3" fill="none" stroke="#333" stroke-width=".9"/><rect x="3.500" y="10.500" width="3" height="2.500" fill="none" stroke="#333" stroke-width=".9"/><rect x="8.500" y="8.500" width="4" height="4.500" fill="none" stroke="#333" stroke-width=".9"/></svg>
<div class="tr" style="left:44px;top:184px;letter-spacing:-0.2px">Sheets (all)</div>
<div style="left:12px;top:211px;width:10px;height:0;border-top:1px dotted #a0a0a0"></div>
<div class="pm p" style="left:7px;top:207px"></div>
<svg style="left:22px;top:203px" width="16" height="16" viewBox="0 0 16 16"><path d="M1.500 7.500v7h13v-12h-5" fill="#f4f4f4" stroke="#222" stroke-width="1.200"/><rect x="1.500" y="1.500" width="6" height="6" fill="#fff" stroke="#222" stroke-width="1.100"/><path d="M9.500 2.500v7h-8" fill="none" stroke="#222"/></svg>
<div style="left:41px;top:202px;width:48px;height:18px;background:#e0e0e0"></div>
<div class="tr" style="left:44px;top:202px;letter-spacing:-0.2px">Families</div>
<div style="left:12px;top:229px;width:10px;height:0;border-top:1px dotted #a0a0a0"></div>
<div class="pm p" style="left:7px;top:225px"></div>
<svg style="left:22px;top:221px" width="16" height="16" viewBox="0 0 16 16"><path d="M3.500 1.500h-2v13h2M12.500 1.500h2v13h-2" fill="none" stroke="#222" stroke-width="1.200"/><circle cx="7" cy="7" r="3.800" fill="#d0d0d0" stroke="#222"/><rect x="6.500" y="7.500" width="5.500" height="5" rx="1" fill="#e4e4e4" stroke="#222" stroke-width=".9"/></svg>
<div class="tr" style="left:44px;top:220px;letter-spacing:-0.2px">Groups</div>
<div style="left:12px;top:247px;width:10px;height:0;border-top:1px dotted #a0a0a0"></div>
<div class="pm p" style="left:7px;top:243px"></div>
<svg style="left:22px;top:239px" width="16" height="16" viewBox="0 0 16 16"><rect x="1" y="5.500" width="8" height="5" rx="2.500" fill="none" stroke="#8a6a10" stroke-width="2.600"/><rect x="7" y="5.500" width="8" height="5" rx="2.500" fill="none" stroke="#8a6a10" stroke-width="2.600"/><rect x="1" y="5.500" width="8" height="5" rx="2.500" fill="none" stroke="#f2c43a" stroke-width="1.400"/><rect x="7" y="5.500" width="8" height="5" rx="2.500" fill="none" stroke="#f2c43a" stroke-width="1.400"/></svg>
<div class="tr" style="left:44px;top:238px;letter-spacing:-0.2px">Revit Links</div>
<div style="left:12px;top:265px;width:10px;height:0;border-top:1px dotted #a0a0a0"></div>
<div class="pm p" style="left:7px;top:261px"></div>
<svg style="left:22px;top:257px" width="16" height="16" viewBox="0 0 16 16"><path d="M3.500 1.500h-2v13h2M12.500 1.500h2v13h-2" fill="none" stroke="#222" stroke-width="1.200"/><path d="M3.500 4.500l1.500-1.500h4v5h-5.500z" fill="#bfe0f5" stroke="#2c5a8a" stroke-width=".9"/><rect x="3.500" y="8.500" width="4.500" height="4.500" fill="#f4f4f4" stroke="#333" stroke-width=".9"/><rect x="8.500" y="7.500" width="4" height="5.500" fill="#f4f4f4" stroke="#333" stroke-width=".9"/></svg>
<div class="tr" style="left:44px;top:256px;letter-spacing:-0.2px">Assemblies</div>
</div>
<div class="abs" style="left:237px;top:1109px;width:1480px;height:19px;background:#f0f0f0">
  <div class="t" style="left:29px;top:2px;letter-spacing:0">1 : 20</div>
  <svg style="left:0;top:-1px" width="1480" height="20" viewBox="237 1108 1480 20">
    <rect x="318.500" y="1111.500" width="15" height="10" fill="#fff" stroke="#222"/><path d="M320 1113h13M320 1115h13M320 1117h13M320 1119h13" stroke="#222" stroke-dasharray="1 1"/><path d="M320.500 1114h13M320.500 1116h13M320.500 1118h13M320.500 1120h13" stroke="#222" stroke-dasharray="1 1" stroke-dashoffset="1"/>
    <path d="M340.500 1115.500l4-4h10l-4 4zM340.500 1115.500h10v7h-10zM350.500 1115.500l4-4v7l-4 4z" fill="#9ecdf0" stroke="#1d5fa8"/>
    <circle cx="366.500" cy="1116" r="4" fill="#ffd84a" stroke="#c98a10"/><path d="M366.500 1109.500v2M360 1116h2M362 1111.500l1.500 1.500M371 1111.500l-1.500 1.500M362 1120.500l1.500-1.500" stroke="#c98a10" stroke-width="1.200"/><path d="M369 1117l6 6M375 1117l-6 6" stroke="#d22" stroke-width="1.800"/>
    <circle cx="387" cy="1115" r="3.500" fill="none" stroke="#c4c4c4" stroke-dasharray="1.500 1"/><path d="M383 1121h8M390 1118l6 5M396 1118l-6 5" stroke="#c4c4c4" stroke-width="1.200"/>
    <path d="M402 1112l3-1 8 2v7l-4 2-5-3z" fill="#fff" stroke="#222"/><path d="M401 1111l5 3" stroke="#222"/><circle cx="413.500" cy="1117.500" r="2.500" fill="#fff" stroke="#1d5fa8"/><path d="M413.500 1120v3" stroke="#1d5fa8"/>
    <path d="M424 1118h3v-5h9v5" fill="none" stroke="#1d5fa8" stroke-width="1.300"/><path d="M421 1118h4M429 1115v8" stroke="#222"/><path d="M430 1115l7 7M437 1115l-7 7" stroke="#d22" stroke-width="1.800"/>
    <path d="M445 1118h3v-5h7v5" fill="none" stroke="#1d5fa8" stroke-width="1.300"/><path d="M442 1118h4M450 1115v8" stroke="#222"/><circle cx="456.500" cy="1116.500" r="2.500" fill="#fff" stroke="#1d5fa8"/><path d="M456.500 1119v3" stroke="#1d5fa8"/>
    <path d="M464.500 1115l6-5 7 3 1 3v4l-6 3-8-3z" fill="#fff" stroke="#222" stroke-width="1.100"/><path d="M464.500 1115l8 2 5-4M472.500 1117v6" fill="none" stroke="#222"/><rect x="472.500" y="1118.500" width="6" height="5" fill="#fff" stroke="#2a8a3a"/><path d="M474 1118.500v-1.500a1.500 1.500 0 0 1 3 0v1.500" fill="none" stroke="#2a8a3a"/>
    <path d="M485 1114c3-2 5 4 8 3s4-4 7-2" fill="none" stroke="#222" stroke-width="1.200"/><ellipse cx="496" cy="1119" rx="4" ry="2.500" fill="none" stroke="#222"/>
    <circle cx="513.500" cy="1115.500" r="2.500" fill="#fff" stroke="#1d5fa8"/><path d="M513.500 1118v3" stroke="#1d5fa8"/>
    <rect x="528.500" y="1113.500" width="10" height="9" fill="#fff" stroke="#222" stroke-dasharray="2 1" stroke-width="1.300"/><path d="M527 1112h3M536 1112h4" stroke="#222" stroke-width="1.300"/><rect x="535.500" y="1116.500" width="6" height="5" rx="1" fill="#fff" stroke="#222"/><circle cx="538.500" cy="1119" r="1.200" fill="#222"/>
    <g stroke="#b4b4b4" fill="none"><path d="M548 1115l4-3h8l3 3v6h-15zM552 1112v9M556 1112v9M560 1112v9"/><circle cx="560.500" cy="1118.500" r="2.500" fill="#eee"/></g>
    <path d="M570 1115l3-3h8v8l-3 3h-8zM570 1115h8v8M578 1115l3-3" fill="#fff" stroke="#222"/><path d="M572.500 1113.500h8v7" fill="none" stroke="#222"/><rect x="574" y="1117.500" width="4" height="4" fill="#ddd" stroke="#222" stroke-width=".8"/>
    <path d="M590.500 1110v13M590.500 1111.500h15M605.500 1110v6M592 1114h3M597 1114h3M592 1122h3M597 1122h2" stroke="#222" fill="none"/><rect x="600.500" y="1117.500" width="6" height="5" fill="#fff" stroke="#222"/><path d="M602 1117.500v-1a1.500 1.500 0 0 1 3 0v1" fill="none" stroke="#222"/>
    <path d="M1146 1118.500h16" stroke="#777" stroke-width="1.500"/>
    <path d="M1712 1119v1M1709 1122v1M1712 1122v1M1706 1125v1M1709 1125v1M1712 1125v1" stroke="#aaa" stroke-width="2"/>
  </svg>
</div>
<div id="status" class="abs">
  <div class="t" style="left:2px;top:5px;letter-spacing:-0.3px">Click to select, TAB for alternates, CTRL adds, SHIFT unselects.</div>
  <div style="left:920px;top:4px;width:204px;height:18px;background:#fff"></div>
  <div style="left:1236px;top:4px;width:204px;height:18px;background:#fff"></div>
  <div class="t" style="left:1238px;top:5px;color:#7a7a7a;letter-spacing:-0.2px">Main Model</div>
  <div class="t" style="left:1153px;top:5px">:0</div>
  <div class="t" style="left:1838px;top:5px">:0</div>
  <svg style="left:0;top:0" width="1919" height="24" viewBox="0 1128 1919 24">
    <path d="M1111 1138.500l4.500 4.500 4.500-4.500M1427 1138.500l4.500 4.500 4.500-4.500" fill="none" stroke="#8a8a8a" stroke-width="1.100"/>
    <path d="M1105.500 1132v18M1421.500 1132v18" stroke="#e4e4e4"/>
    <!-- worksets icon -->
    <path d="M899 1134l3-2h5l-2 2zM899 1134h6v6h-6zM905 1134l2-2v6l-2 2z" fill="#8fc46a" stroke="#3d6a25" stroke-width=".8"/><path d="M896 1141l3-2h5v7l-2 2h-6z" fill="#6aaee8" stroke="#1d4f8a" stroke-width=".8"/><path d="M907 1138v3l1.500 1.500v5.500h2v-5.500l1.500-1.500v-3" fill="#fff" stroke="#1d2f5a"/>
    <path d="M1134 1148l3-6c-2-3 1-8 5-8l6 0-3 5h-4l-2 2z" fill="#e8e8e8" stroke="#9a9a9a"/><path d="M1133 1148h9" stroke="#9a9a9a" stroke-width="2"/>
    <rect x="1186.500" y="1132.500" width="15" height="14" rx="1" fill="#fff" stroke="#1d2f5a" stroke-width="1.300"/><rect x="1187" y="1133" width="14" height="3" fill="#1d2f5a"/><path d="M1189 1139h2M1189 1142h2M1189 1145h2M1193 1139h6M1193 1142h6M1193 1145h6" stroke="#1d2f5a"/>
    <path d="M1213 1133h13v13h-8" fill="#b4b4b4" stroke="#9a9a9a"/><path d="M1213 1143h7M1217 1140l3 3-3 3" stroke="#8a8a8a" fill="none" stroke-width="1.300"/>
    <!-- right icons -->
    <rect x="1668" y="1133.500" width="8" height="5" rx="2.500" fill="none" stroke="#c99a10" stroke-width="1.800"/><rect x="1674" y="1133.500" width="8" height="5" rx="2.500" fill="none" stroke="#c99a10" stroke-width="1.800"/>
    <g><path d="M1675.500 1137.500v10l2.500-2.500 2 4 1.500-.800-2-4h3.500z" fill="#fff" stroke="#222" stroke-width=".9"/></g>
    <path d="M1695 1145l8-8h5M1695 1145h11M1697 1142h8" stroke="#1d5fa8" fill="none" stroke-width="1.200"/><path d="M1704 1133l5.500 5.500M1709.500 1133l-5.500 5.500" stroke="#d22" stroke-width="1.700"/><g transform="translate(28 0)"><path d="M1675.500 1137.500v10l2.500-2.500 2 4 1.500-.800-2-4h3.500z" fill="#fff" stroke="#222" stroke-width=".9"/></g>
    <rect x="1722.500" y="1132.500" width="9" height="3" rx="1" fill="#f0a070" stroke="#b85a20"/><rect x="1723.500" y="1136" width="7" height="4" fill="#f0a070" stroke="#b85a20"/><path d="M1720 1141h13M1726.500 1141v8" stroke="#b85a20" stroke-width="1.300"/><g transform="translate(54 0)"><path d="M1675.500 1137.500v10l2.500-2.500 2 4 1.500-.800-2-4h3.500z" fill="#fff" stroke="#222" stroke-width=".9"/></g>
    <path d="M1747.500 1136l6-3v12l-6 3zM1747.500 1148h10" fill="#cfe6f8" stroke="#1d5fa8" stroke-width="1.200"/><path d="M1756 1133l5.500 5.500M1761.500 1133l-5.500 5.500" stroke="#d22" stroke-width="1.700"/><g transform="translate(80 0)"><path d="M1675.500 1137.500v10l2.500-2.500 2 4 1.500-.800-2-4h3.500z" fill="#fff" stroke="#222" stroke-width=".9"/></g>
    <path d="M1777.500 1132v10M1772.500 1137h10M1775.500 1134l2-2 2 2M1775.500 1140l2 2 2-2M1774.500 1135l-2 2 2 2M1780.500 1135l2 2-2 2" stroke="#222" fill="none" stroke-width="1"/><g transform="translate(106 -1)"><path d="M1675.500 1137.500v10l2.500-2.500 2 4 1.500-.800-2-4h3.500z" fill="#fff" stroke="#222" stroke-width=".9"/></g>
    <circle cx="1806" cy="1140" r="5" fill="none" stroke="#b9b9b9" stroke-width="2.500" stroke-dasharray="2.500 1.500"/>
    <path d="M1821.500 1133.500h15l-5.500 7v5.500l-4 1.500v-7z" fill="#c9ced6" stroke="#7d848e" stroke-width="1.200"/>
  </svg>
</div>
<div id="blackbar" class="abs"></div>
</body>
</html>
